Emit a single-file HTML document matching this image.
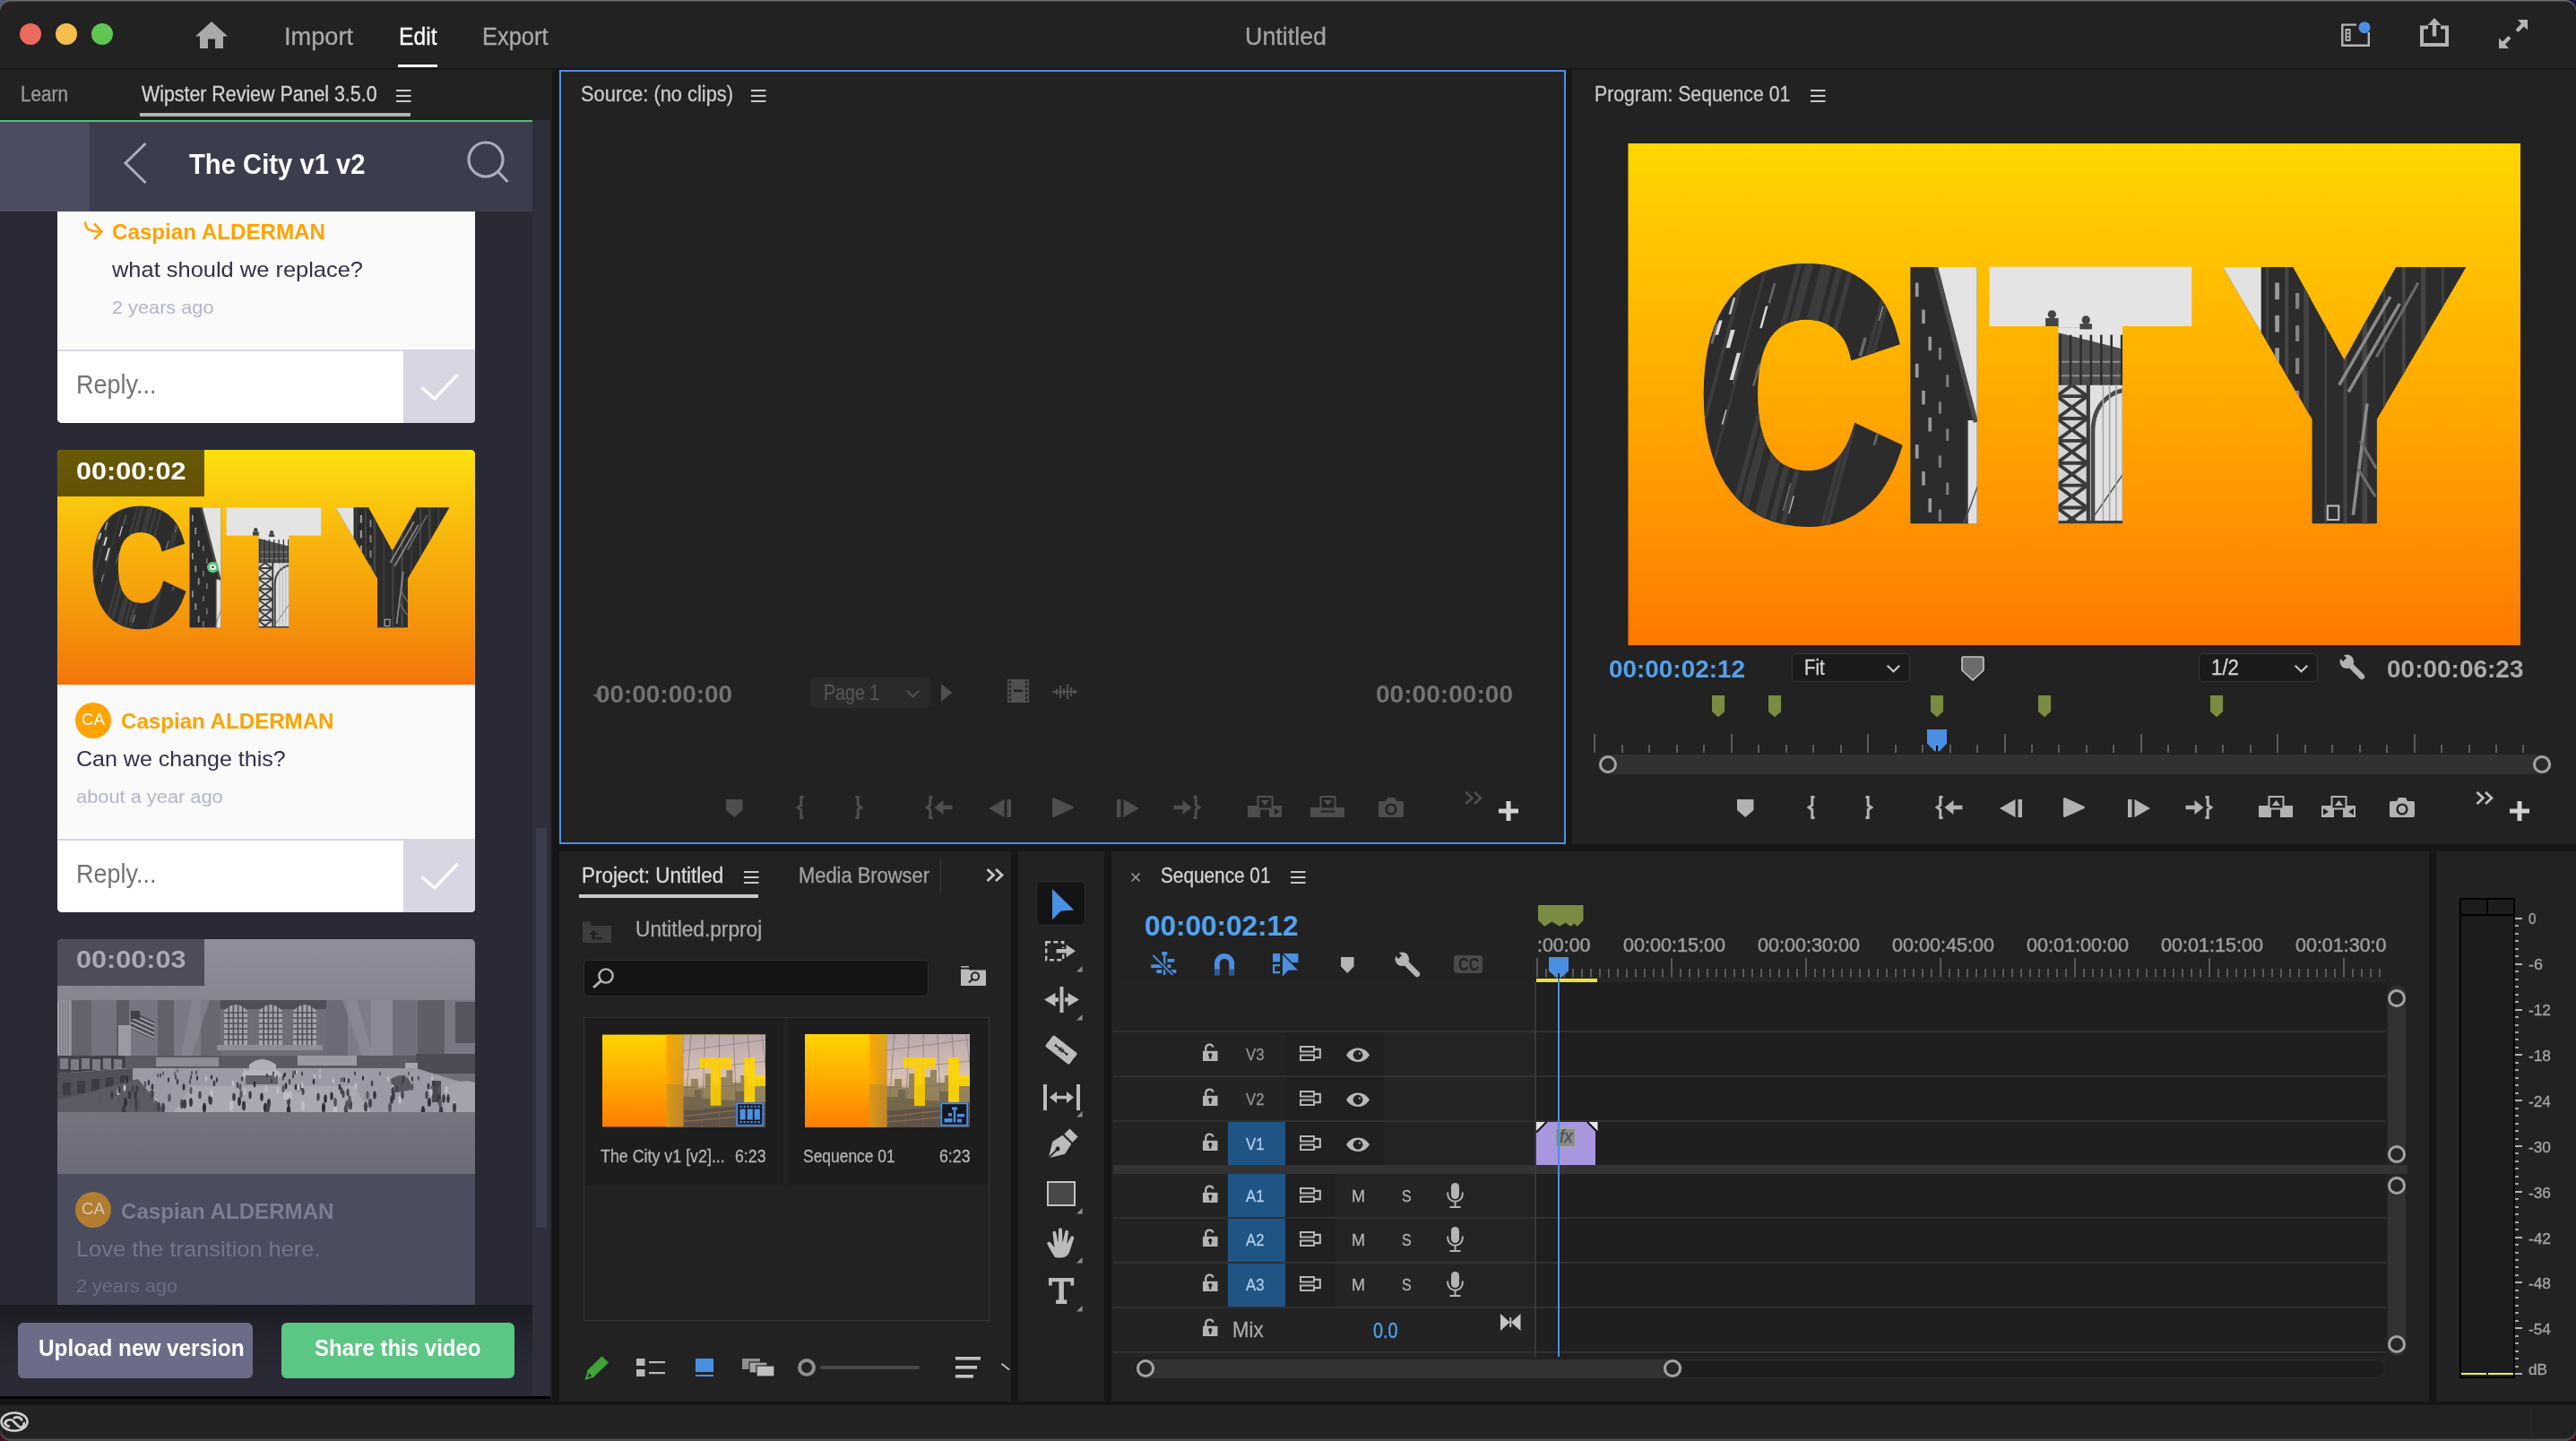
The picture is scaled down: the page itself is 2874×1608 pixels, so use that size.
<!DOCTYPE html>
<html><head><meta charset="utf-8"><title>Untitled</title><style>
html,body{margin:0;padding:0;}
body{width:2874px;height:1608px;background:#161616;position:relative;overflow:hidden;font-family:"Liberation Sans",sans-serif;}
div,svg,span.t{position:absolute;}
div.sec{left:0;top:0;width:0;height:0;}
span.t{white-space:nowrap;line-height:1;transform-origin:0 0;display:block;}
svg{overflow:visible;}
</style></head><body>
<div id="app-frame" class="sec">
<div style="left:0px;top:0px;width:16px;height:16px;background:#50607c;"></div>
<div style="left:2858px;top:0px;width:16px;height:16px;background:#15153e;"></div>
<div style="left:0px;top:1592px;width:16px;height:16px;background:#4a0f1c;"></div>
<div style="left:2858px;top:1592px;width:16px;height:16px;background:#3a0c16;"></div>
<div style="left:0px;top:0px;width:2874px;height:75.5px;background:#222222;border-radius:12px 12px 0 0;box-shadow:inset 0 1.5px 0 #707070;"></div>
<div style="left:22px;top:26px;width:24px;height:24px;background:#ec6a5e;border-radius:50%;"></div>
<div style="left:62px;top:26px;width:24px;height:24px;background:#f4bf4f;border-radius:50%;"></div>
<div style="left:102px;top:26px;width:24px;height:24px;background:#61c554;border-radius:50%;"></div>
<svg style="left:218px;top:24px;" width="36" height="30" viewBox="0 0 36 30"><path d="M18 0 L36 16.5 H31 V30 H22 V19.5 H14 V30 H5 V16.5 H0 Z" fill="#a9a9a9"/></svg>
<span class="t" id="t0" style="left:317px;top:26.62px;font-size:27.5px;color:#a9a9a9;-webkit-text-stroke:0.3px #a9a9a9;transform:scaleX(0.9880);">Import</span>
<span class="t" id="t1" style="left:445px;top:26.62px;font-size:27.5px;color:#ffffff;-webkit-text-stroke:0.3px #ffffff;transform:scaleX(0.8968);">Edit</span>
<div style="left:444px;top:72px;width:44px;height:3px;background:#ffffff;"></div>
<span class="t" id="t2" style="left:537.5px;top:26.62px;font-size:27.5px;color:#a9a9a9;-webkit-text-stroke:0.3px #a9a9a9;transform:scaleX(0.9247);">Export</span>
<span class="t" id="t3" style="left:1388.5px;top:27.12px;font-size:27.5px;color:#a3a3a3;-webkit-text-stroke:0.3px #a3a3a3;transform:scaleX(0.9759);">Untitled</span>
<svg style="left:2612px;top:20px;" width="34" height="34" viewBox="0 0 34 34"><path d="M17 7.6 H1.3 V30.8 H30.8 V16" fill="none" stroke="#b4b4b4" stroke-width="2.4"/><rect x="4.5" y="12" width="6" height="14" fill="#b4b4b4"/><rect x="6.3" y="14.2" width="2.4" height="2.2" fill="#222"/><rect x="6.3" y="18" width="2.4" height="2.2" fill="#222"/><rect x="6.3" y="21.8" width="2.4" height="2.2" fill="#222"/><circle cx="26" cy="10.7" r="6.5" fill="#4a90e2"/></svg>
<svg style="left:2700px;top:20px;" width="32" height="32" viewBox="0 0 32 32"><path d="M9 10.5 H2 V30 H30 V10.5 H23" fill="none" stroke="#b4b4b4" stroke-width="4"/><path d="M16 0 L23.5 8 H18.2 V20.5 H13.8 V8 H8.5 Z" fill="#b4b4b4"/></svg>
<svg style="left:2788px;top:22px;" width="32" height="32" viewBox="0 0 32 32"><path d="M32 0 V11.5 L28 7.5 L21.5 14 L18.5 11 L25 4.5 L21 0 Z M0 32 V20.5 L4 24.5 L10.5 18 L13.5 21 L7 27.5 L11 32 Z" fill="#b4b4b4"/></svg>
<div style="left:0px;top:1568px;width:2874px;height:40px;background:#222222;border-radius:0 0 12px 12px;box-shadow:inset 0 -2.5px 0 #4c4c4c;"></div>
<div style="left:2823px;top:1570px;width:1px;height:34px;background:#2c2c2c;"></div>
<svg style="left:0px;top:1575px;" width="32" height="23" viewBox="0 0 32 23"><g fill="none" stroke="#cfcfcf" stroke-width="2.6"><ellipse cx="16" cy="11.5" rx="14.5" ry="10"/><path d="M5 14.5 C6 9 12 8 15 11 L20.5 16.5 C24 19 28 16 26.5 12"/><path d="M11 16.5 C7 16.8 5.5 14 6.5 12 M15 8 C18 5 24 6.5 24.5 10.5"/></g></svg>
<div style="left:0px;top:78px;width:616px;height:1483px;background:#222222;"></div>
<div style="left:624px;top:78px;width:1122.5px;height:864px;background:#222222;box-sizing:border-box;border:2.2px solid #4891ec;"></div>
<div style="left:1754px;top:78px;width:1120px;height:864px;background:#222222;"></div>
<div style="left:624px;top:950px;width:503.5px;height:614px;background:#222222;"></div>
<div style="left:1136px;top:950px;width:96px;height:614px;background:#222222;"></div>
<div style="left:1240px;top:950px;width:1470px;height:614px;background:#222222;"></div>
<div style="left:2718px;top:950px;width:156px;height:614px;background:#222222;"></div>
</div>
<div id="shared-defs" class="sec">
<svg width="0" height="0" style="left:0;top:0"><defs><linearGradient id="cg" x1="0" y1="0" x2="0" y2="1"><stop offset="0" stop-color="#ffd600"/><stop offset="0.4" stop-color="#ffb300"/><stop offset="0.75" stop-color="#ff9300"/><stop offset="1" stop-color="#ff7800"/></linearGradient><mask id="cm" maskUnits="userSpaceOnUse" x="0" y="0" width="1920" height="1080"><text y="800" font-family="Liberation Sans, sans-serif" font-weight="700" font-size="750" fill="#fff" stroke="#fff" stroke-width="36" stroke-linejoin="miter"><tspan x="152.1" textLength="436.2" lengthAdjust="spacingAndGlyphs">C</tspan><tspan x="575.3" textLength="207.3" lengthAdjust="spacingAndGlyphs">I</tspan><tspan x="790.85" y="795" font-size="736" stroke-width="46" fill="#fff" stroke="#fff" textLength="408" lengthAdjust="spacingAndGlyphs">T</tspan><tspan x="1298.2" y="800" textLength="485.7" lengthAdjust="spacingAndGlyphs">Y</tspan></text></mask><linearGradient id="cg2" x1="0" y1="0" x2="0" y2="1"><stop offset="0" stop-color="#fde10f"/><stop offset="0.3" stop-color="#f9bd0d"/><stop offset="0.65" stop-color="#f59c0b"/><stop offset="1" stop-color="#f2760b"/></linearGradient><g id="cityletters"><text y="800" font-family="Liberation Sans, sans-serif" font-weight="700" font-size="750" fill="#2c2c2c" stroke="#2c2c2c" stroke-width="36" stroke-linejoin="miter"><tspan x="152.1" textLength="436.2" lengthAdjust="spacingAndGlyphs">C</tspan><tspan x="575.3" textLength="207.3" lengthAdjust="spacingAndGlyphs">I</tspan><tspan x="790.85" y="795" font-size="736" stroke-width="46" fill="#c4c4c4" stroke="#c4c4c4" textLength="408" lengthAdjust="spacingAndGlyphs">T</tspan><tspan x="1298.2" y="800" textLength="485.7" lengthAdjust="spacingAndGlyphs">Y</tspan></text><g mask="url(#cm)"><path d="M296 350 l5 0 l-13 48 l-5 0 z" fill="#d8d8d8"/><path d="M313 301 l5 0 l-12 43 l-5 0 z" fill="#6a6a6a"/><path d="M333 398 l5 0 l-12 44 l-5 0 z" fill="#d8d8d8"/><path d="M540 604 l5 0 l-13 45 l-5 0 z" fill="#6a6a6a"/><path d="M189 387 l6 0 l-12 44 l-6 0 z" fill="#6a6a6a"/><path d="M226 332 l10 0 l-10 36 l-10 0 z" fill="#bdbdbd"/><path d="M210 573 l6 0 l-9 32 l-6 0 z" fill="#d8d8d8"/><path d="M390 598 l8 0 l-12 42 l-8 0 z" fill="#8c8c8c"/><path d="M352 759 l6 0 l-11 38 l-6 0 z" fill="#bdbdbd"/><path d="M443 399 l8 0 l-13 45 l-8 0 z" fill="#8c8c8c"/><path d="M454 423 l6 0 l-17 59 l-6 0 z" fill="#6a6a6a"/><path d="M234 451 l8 0 l-16 58 l-8 0 z" fill="#d8d8d8"/><path d="M468 574 l7 0 l-16 56 l-7 0 z" fill="#8c8c8c"/><path d="M402 577 l10 0 l-11 41 l-10 0 z" fill="#8c8c8c"/><path d="M355 622 l9 0 l-8 27 l-9 0 z" fill="#6a6a6a"/><path d="M281 474 l5 0 l-14 48 l-5 0 z" fill="#6a6a6a"/><path d="M309 594 l6 0 l-12 42 l-6 0 z" fill="#8c8c8c"/><path d="M220 401 l10 0 l-11 39 l-10 0 z" fill="#d8d8d8"/><path d="M235 483 l6 0 l-10 35 l-6 0 z" fill="#6a6a6a"/><path d="M507 418 l7 0 l-11 40 l-7 0 z" fill="#6a6a6a"/><path d="M544 350 l6 0 l-9 31 l-6 0 z" fill="#bdbdbd"/><path d="M175 710 l7 0 l-9 31 l-7 0 z" fill="#bdbdbd"/><path d="M333 466 l11 0 l-13 45 l-11 0 z" fill="#d8d8d8"/><path d="M348 732 l9 0 l-16 58 l-9 0 z" fill="#6a6a6a"/><path d="M325 479 l7 0 l-12 42 l-7 0 z" fill="#bdbdbd"/><path d="M196 381 l7 0 l-9 31 l-7 0 z" fill="#d8d8d8"/><path d="M213 250 l-160 600" stroke="#3c3c3c" stroke-width="10"/><path d="M395 250 l-160 600" stroke="#3c3c3c" stroke-width="13"/><path d="M428 250 l-160 600" stroke="#3c3c3c" stroke-width="5"/><path d="M257 250 l-160 600" stroke="#3c3c3c" stroke-width="8"/><path d="M436 250 l-160 600" stroke="#3c3c3c" stroke-width="14"/><path d="M423 250 l-160 600" stroke="#3c3c3c" stroke-width="9"/><path d="M218 250 l-160 600" stroke="#3c3c3c" stroke-width="9"/><path d="M581 250 l-160 600" stroke="#3c3c3c" stroke-width="9"/><path d="M301 250 l-160 600" stroke="#3c3c3c" stroke-width="5"/><path d="M485 250 l-160 600" stroke="#3c3c3c" stroke-width="11"/><path d="M371 250 l-160 600" stroke="#3c3c3c" stroke-width="11"/><path d="M387 250 l-160 600" stroke="#3c3c3c" stroke-width="6"/><path d="M570 250 l-160 600" stroke="#3c3c3c" stroke-width="8"/><path d="M460 250 l-160 600" stroke="#3c3c3c" stroke-width="13"/><path d="M655 240 L760 240 L760 590 L748 600 Z" fill="#e3e3e3"/><rect x="729" y="596" width="40" height="240" fill="#e0e0e0"/><path d="M729 596 V836" stroke="#3a3a3a" stroke-width="5"/><path d="M716 836 L766 700" stroke="#555" stroke-width="3"/><path d="M655 240 L748 600" stroke="#4a4a4a" stroke-width="10"/><rect x="618" y="300" width="7" height="30" fill="#9a9a9a"/><rect x="668" y="440" width="6" height="26" fill="#7e7e7e"/><rect x="632" y="358" width="7" height="30" fill="#9a9a9a"/><rect x="684" y="498" width="6" height="26" fill="#7e7e7e"/><rect x="646" y="416" width="7" height="30" fill="#9a9a9a"/><rect x="668" y="556" width="6" height="26" fill="#7e7e7e"/><rect x="618" y="474" width="7" height="30" fill="#9a9a9a"/><rect x="684" y="614" width="6" height="26" fill="#7e7e7e"/><rect x="632" y="532" width="7" height="30" fill="#9a9a9a"/><rect x="668" y="672" width="6" height="26" fill="#7e7e7e"/><rect x="646" y="590" width="7" height="30" fill="#9a9a9a"/><rect x="684" y="730" width="6" height="26" fill="#7e7e7e"/><rect x="618" y="648" width="7" height="30" fill="#9a9a9a"/><rect x="668" y="788" width="6" height="26" fill="#7e7e7e"/><rect x="632" y="706" width="7" height="30" fill="#9a9a9a"/><rect x="684" y="846" width="6" height="26" fill="#7e7e7e"/><rect x="646" y="764" width="7" height="30" fill="#9a9a9a"/><rect x="668" y="904" width="6" height="26" fill="#7e7e7e"/><rect x="760" y="240" width="470" height="164" fill="#e4e4e4"/><rect x="912" y="396" width="170" height="440" fill="#e0e0e0"/><rect x="912" y="400" width="78" height="440" fill="#d4d4d4"/><path d="M922 400 L988 448 M988 400 L922 448 M912 400 H990" stroke="#3a3a3a" stroke-width="7.5" fill="none"/><path d="M922 448 L988 496 M988 448 L922 496 M912 448 H990" stroke="#3a3a3a" stroke-width="7.5" fill="none"/><path d="M922 496 L988 544 M988 496 L922 544 M912 496 H990" stroke="#3a3a3a" stroke-width="7.5" fill="none"/><path d="M922 544 L988 592 M988 544 L922 592 M912 544 H990" stroke="#3a3a3a" stroke-width="7.5" fill="none"/><path d="M922 592 L988 640 M988 592 L922 640 M912 592 H990" stroke="#3a3a3a" stroke-width="7.5" fill="none"/><path d="M922 640 L988 688 M988 640 L922 688 M912 640 H990" stroke="#3a3a3a" stroke-width="7.5" fill="none"/><path d="M922 688 L988 736 M988 688 L922 736 M912 688 H990" stroke="#3a3a3a" stroke-width="7.5" fill="none"/><path d="M922 736 L988 784 M988 736 L922 784 M912 736 H990" stroke="#3a3a3a" stroke-width="7.5" fill="none"/><path d="M922 784 L988 832 M988 784 L922 832 M912 784 H990" stroke="#3a3a3a" stroke-width="7.5" fill="none"/><path d="M921 400 V830 M990 400 V830" stroke="#3a3a3a" stroke-width="8"/><path d="M1000 830 V620 C1000 560 1040 530 1080 530" fill="none" stroke="#4a4a4a" stroke-width="9"/><path d="M1004 800 L1080 690" stroke="#555" stroke-width="3"/><path d="M912 404 L1080 446 V520 H912 Z" fill="#4e4e4e"/><path d="M912 396 H1080 V446 L912 404 Z" fill="#e4e4e4"/><path d="M912 470 H1080 M912 500 H1080" stroke="#8a8a8a" stroke-width="4"/><path d="M930 412 V520" stroke="#2e2e2e" stroke-width="5"/><path d="M952 412 V520" stroke="#2e2e2e" stroke-width="5"/><path d="M974 412 V520" stroke="#2e2e2e" stroke-width="5"/><path d="M996 412 V520" stroke="#2e2e2e" stroke-width="5"/><path d="M1018 412 V520" stroke="#2e2e2e" stroke-width="5"/><path d="M1040 412 V520" stroke="#2e2e2e" stroke-width="5"/><path d="M1062 412 V520" stroke="#2e2e2e" stroke-width="5"/><path d="M1022 520 V830" stroke="#a8a8a8" stroke-width="3"/><path d="M1036 520 V830" stroke="#a8a8a8" stroke-width="3"/><path d="M1050 520 V830" stroke="#a8a8a8" stroke-width="3"/><path d="M1064 520 V830" stroke="#a8a8a8" stroke-width="3"/><circle cx="912" cy="368" r="9" fill="#444"/><rect x="898" y="376" width="28" height="20" fill="#444"/><circle cx="985" cy="380" r="9" fill="#444"/><rect x="972" y="388" width="26" height="12" fill="#444"/><rect x="912" y="812" width="170" height="26" fill="#3c3c3c"/><rect x="1260" y="240" width="102" height="200" fill="#e2e2e2"/><path d="M1375 250 V830" stroke="#444" stroke-width="5"/><path d="M1417 250 V830" stroke="#444" stroke-width="8"/><path d="M1459 250 V830" stroke="#444" stroke-width="11"/><path d="M1501 250 V830" stroke="#444" stroke-width="5"/><path d="M1543 250 V830" stroke="#444" stroke-width="8"/><path d="M1585 250 V830" stroke="#444" stroke-width="11"/><path d="M1627 250 V830" stroke="#444" stroke-width="5"/><path d="M1669 250 V830" stroke="#444" stroke-width="8"/><path d="M1711 250 V830" stroke="#444" stroke-width="11"/><path d="M1753 250 V830" stroke="#444" stroke-width="5"/><rect x="1392" y="300" width="9" height="36" fill="#9b9b9b"/><rect x="1436" y="322" width="8" height="34" fill="#858585"/><rect x="1392" y="370" width="9" height="36" fill="#9b9b9b"/><rect x="1436" y="392" width="8" height="34" fill="#858585"/><rect x="1392" y="440" width="9" height="36" fill="#9b9b9b"/><rect x="1436" y="462" width="8" height="34" fill="#858585"/><rect x="1392" y="510" width="9" height="36" fill="#9b9b9b"/><rect x="1436" y="532" width="8" height="34" fill="#858585"/><rect x="1392" y="580" width="9" height="36" fill="#9b9b9b"/><rect x="1436" y="602" width="8" height="34" fill="#858585"/><rect x="1392" y="650" width="9" height="36" fill="#9b9b9b"/><rect x="1436" y="672" width="8" height="34" fill="#858585"/><rect x="1392" y="720" width="9" height="36" fill="#9b9b9b"/><rect x="1436" y="742" width="8" height="34" fill="#858585"/><path d="M1640 330 L1530 520 M1660 345 L1550 535 M1590 560 L1560 800" stroke="#8a8a8a" stroke-width="7" fill="none"/><path d="M1700 300 L1610 460 M1575 640 L1610 700 M1570 700 L1608 760" stroke="#6c6c6c" stroke-width="6" fill="none"/><rect x="1505" y="780" width="24" height="30" fill="none" stroke="#bbb" stroke-width="4"/></g></g><g id="cityimg"><rect width="1920" height="1080" fill="url(#cg)"/><use href="#cityletters"/></g><g id="gcphoto"><rect width="466" height="125" fill="#6e6e7a"/><rect x="120" y="0" width="250" height="10" fill="#4e4e59"/><rect x="0" y="0" width="16" height="70" fill="#8d8d99"/><rect x="16" y="0" width="22" height="70" fill="#63636e"/><rect x="38" y="0" width="28" height="70" fill="#747480"/><rect x="66" y="0" width="14" height="70" fill="#5c5c67"/><rect x="80" y="0" width="32" height="70" fill="#767682"/><rect x="112" y="0" width="18" height="70" fill="#61616c"/><rect x="130" y="0" width="30" height="70" fill="#7a7a86"/><rect x="160" y="0" width="22" height="70" fill="#676772"/><rect x="300" y="0" width="24" height="70" fill="#6b6b77"/><rect x="324" y="0" width="26" height="70" fill="#7d7d89"/><rect x="350" y="0" width="24" height="70" fill="#8a8a96"/><rect x="374" y="0" width="28" height="70" fill="#70707c"/><rect x="402" y="0" width="30" height="70" fill="#5e5e69"/><rect x="432" y="0" width="34" height="70" fill="#787884"/><rect x="0" y="2" width="14" height="58" fill="#a2a2ad"/><path d="M3 2 V60" stroke="#5a5a65" stroke-width="1"/><path d="M6 2 V60" stroke="#5a5a65" stroke-width="1"/><path d="M9 2 V60" stroke="#5a5a65" stroke-width="1"/><path d="M12 2 V60" stroke="#5a5a65" stroke-width="1"/><rect x="444" y="2" width="22" height="46" fill="#55555f"/><rect x="68" y="28" width="14" height="34" fill="#9a9aa5"/><path d="M186 50 V12 Q199 -2 212 12 V50 Z" fill="#a3a3ae"/><path d="M191.2 3 V50" stroke="#4d4d58" stroke-width="1.6"/><path d="M196.4 3 V50" stroke="#4d4d58" stroke-width="1.6"/><path d="M201.6 3 V50" stroke="#4d4d58" stroke-width="1.6"/><path d="M206.8 3 V50" stroke="#4d4d58" stroke-width="1.6"/><path d="M186 14 H212" stroke="#4d4d58" stroke-width="1.4"/><path d="M186 20 H212" stroke="#4d4d58" stroke-width="1.4"/><path d="M186 26 H212" stroke="#4d4d58" stroke-width="1.4"/><path d="M186 32 H212" stroke="#4d4d58" stroke-width="1.4"/><path d="M186 38 H212" stroke="#4d4d58" stroke-width="1.4"/><path d="M186 44 H212" stroke="#4d4d58" stroke-width="1.4"/><path d="M225 50 V12 Q238 -2 251 12 V50 Z" fill="#a3a3ae"/><path d="M230.2 3 V50" stroke="#4d4d58" stroke-width="1.6"/><path d="M235.4 3 V50" stroke="#4d4d58" stroke-width="1.6"/><path d="M240.6 3 V50" stroke="#4d4d58" stroke-width="1.6"/><path d="M245.8 3 V50" stroke="#4d4d58" stroke-width="1.6"/><path d="M225 14 H251" stroke="#4d4d58" stroke-width="1.4"/><path d="M225 20 H251" stroke="#4d4d58" stroke-width="1.4"/><path d="M225 26 H251" stroke="#4d4d58" stroke-width="1.4"/><path d="M225 32 H251" stroke="#4d4d58" stroke-width="1.4"/><path d="M225 38 H251" stroke="#4d4d58" stroke-width="1.4"/><path d="M225 44 H251" stroke="#4d4d58" stroke-width="1.4"/><path d="M263 50 V12 Q276 -2 289 12 V50 Z" fill="#a3a3ae"/><path d="M268.2 3 V50" stroke="#4d4d58" stroke-width="1.6"/><path d="M273.4 3 V50" stroke="#4d4d58" stroke-width="1.6"/><path d="M278.6 3 V50" stroke="#4d4d58" stroke-width="1.6"/><path d="M283.8 3 V50" stroke="#4d4d58" stroke-width="1.6"/><path d="M263 14 H289" stroke="#4d4d58" stroke-width="1.4"/><path d="M263 20 H289" stroke="#4d4d58" stroke-width="1.4"/><path d="M263 26 H289" stroke="#4d4d58" stroke-width="1.4"/><path d="M263 32 H289" stroke="#4d4d58" stroke-width="1.4"/><path d="M263 38 H289" stroke="#4d4d58" stroke-width="1.4"/><path d="M263 44 H289" stroke="#4d4d58" stroke-width="1.4"/><rect x="178" y="50" width="118" height="6" fill="#8d8d98"/><path d="M82 12 L108 24 V44 L82 32 Z" fill="#4b4b56"/><path d="M82 15 L108 27" stroke="#a7a7b2" stroke-width="1.6"/><path d="M82 20 L108 32" stroke="#a7a7b2" stroke-width="1.6"/><path d="M82 25 L108 37" stroke="#a7a7b2" stroke-width="1.6"/><path d="M82 30 L108 42" stroke="#a7a7b2" stroke-width="1.6"/><rect x="82" y="12" width="10" height="9" fill="#3f3f4a"/><path d="M150 0 L170 0 L150 62 L138 62 Z" fill="#8b8b97" opacity="0.6"/><path d="M318 0 L334 0 L352 62 L340 62 Z" fill="#8f8f9b" opacity="0.6"/><rect x="0" y="62" width="76" height="20" fill="#42424d"/><rect x="3" y="65" width="9" height="12" fill="#7c7c88"/><rect x="15" y="66" width="9" height="12" fill="#7c7c88"/><rect x="27" y="65" width="9" height="12" fill="#7c7c88"/><rect x="39" y="66" width="9" height="12" fill="#7c7c88"/><rect x="51" y="65" width="9" height="12" fill="#7c7c88"/><rect x="63" y="66" width="9" height="12" fill="#7c7c88"/><rect x="76" y="62" width="390" height="14" fill="#5a5a65"/><rect x="110" y="64" width="70" height="10" fill="#8c8c97"/><rect x="268" y="62" width="66" height="11" fill="#9a9aa5"/><rect x="400" y="60" width="66" height="22" fill="#4c4c57"/><rect x="388" y="70" width="14" height="18" fill="#a5a5b0"/><path d="M76 76 H400 L466 96 V125 H0 V82 Z" fill="#9b9ba7"/><path d="M150 96 H330 L350 125 H130 Z" fill="#a9a9b4"/><path d="M0 82 L84 76 L84 92 L0 125 Z" fill="#50505b"/><rect x="6" y="92" width="9" height="14" fill="#3c3c47"/><rect x="22" y="90" width="9" height="14" fill="#3c3c47"/><rect x="38" y="88" width="9" height="14" fill="#3c3c47"/><rect x="54" y="86" width="9" height="14" fill="#3c3c47"/><rect x="70" y="84" width="9" height="14" fill="#3c3c47"/><path d="M0 112 L90 88 L120 125 H0 Z" fill="#5b5b66"/><path d="M432 125 V100 Q448 86 466 92 V125 Z" fill="#a3a3ae"/><rect x="418" y="90" width="10" height="24" fill="#484853"/><path d="M372 88 Q392 76 396 100 L374 104 Z" fill="#585863"/><ellipse cx="228" cy="83" rx="22" ry="7" fill="#b6b6c0"/><rect x="210" y="84" width="36" height="10" fill="#62626d"/><path d="M214 72 Q228 60 244 72 V78 H214 Z" fill="#b0b0bb"/><ellipse cx="269" cy="99" rx="1.5" ry="3.8" fill="#55555f"/><ellipse cx="379" cy="99" rx="1.5" ry="3.8" fill="#44444f"/><ellipse cx="253" cy="86" rx="1.1" ry="2.8" fill="#c0c0ca"/><ellipse cx="76" cy="114" rx="1.9" ry="5.1" fill="#2f2f3a"/><ellipse cx="263" cy="85" rx="1.0" ry="2.6" fill="#3a3a45"/><ellipse cx="205" cy="105" rx="1.7" ry="4.4" fill="#55555f"/><ellipse cx="291" cy="108" rx="1.7" ry="4.6" fill="#44444f"/><ellipse cx="375" cy="107" rx="1.7" ry="4.5" fill="#3a3a45"/><ellipse cx="150" cy="81" rx="0.9" ry="2.3" fill="#44444f"/><ellipse cx="354" cy="106" rx="1.7" ry="4.4" fill="#2f2f3a"/><ellipse cx="374" cy="98" rx="1.4" ry="3.8" fill="#c0c0ca"/><ellipse cx="178" cy="89" rx="1.1" ry="3.0" fill="#3a3a45"/><ellipse cx="228" cy="108" rx="1.8" ry="4.6" fill="#2f2f3a"/><ellipse cx="266" cy="97" rx="1.4" ry="3.6" fill="#3a3a45"/><ellipse cx="170" cy="111" rx="1.8" ry="4.8" fill="#44444f"/><ellipse cx="68" cy="102" rx="1.5" ry="4.0" fill="#c0c0ca"/><ellipse cx="203" cy="113" rx="1.9" ry="5.0" fill="#2f2f3a"/><ellipse cx="414" cy="96" rx="1.4" ry="3.6" fill="#3a3a45"/><ellipse cx="396" cy="88" rx="1.1" ry="2.9" fill="#3a3a45"/><ellipse cx="426" cy="100" rx="1.5" ry="3.9" fill="#55555f"/><ellipse cx="272" cy="97" rx="1.4" ry="3.7" fill="#44444f"/><ellipse cx="149" cy="114" rx="1.9" ry="5.0" fill="#3a3a45"/><ellipse cx="76" cy="92" rx="1.2" ry="3.3" fill="#55555f"/><ellipse cx="88" cy="113" rx="1.9" ry="5.0" fill="#44444f"/><ellipse cx="48" cy="111" rx="1.8" ry="4.8" fill="#55555f"/><ellipse cx="110" cy="115" rx="1.9" ry="5.1" fill="#c0c0ca"/><ellipse cx="252" cy="87" rx="1.1" ry="2.8" fill="#44444f"/><ellipse cx="204" cy="97" rx="1.4" ry="3.7" fill="#55555f"/><ellipse cx="141" cy="97" rx="1.4" ry="3.7" fill="#2f2f3a"/><ellipse cx="443" cy="118" rx="2.0" ry="5.4" fill="#c0c0ca"/><ellipse cx="385" cy="92" rx="1.2" ry="3.2" fill="#44444f"/><ellipse cx="418" cy="87" rx="1.1" ry="2.8" fill="#c0c0ca"/><ellipse cx="87" cy="108" rx="1.7" ry="4.5" fill="#44444f"/><ellipse cx="166" cy="88" rx="1.1" ry="2.9" fill="#c0c0ca"/><ellipse cx="175" cy="93" rx="1.3" ry="3.3" fill="#3a3a45"/><ellipse cx="155" cy="81" rx="0.9" ry="2.4" fill="#44444f"/><ellipse cx="209" cy="79" rx="0.8" ry="2.2" fill="#c0c0ca"/><ellipse cx="418" cy="99" rx="1.5" ry="3.8" fill="#55555f"/><ellipse cx="91" cy="116" rx="2.0" ry="5.2" fill="#55555f"/><ellipse cx="132" cy="86" rx="1.1" ry="2.8" fill="#44444f"/><ellipse cx="139" cy="116" rx="2.0" ry="5.2" fill="#44444f"/><ellipse cx="293" cy="85" rx="1.0" ry="2.7" fill="#c0c0ca"/><ellipse cx="403" cy="87" rx="1.1" ry="2.8" fill="#55555f"/><ellipse cx="215" cy="106" rx="1.7" ry="4.4" fill="#3a3a45"/><ellipse cx="254" cy="83" rx="1.0" ry="2.5" fill="#2f2f3a"/><ellipse cx="320" cy="89" rx="1.1" ry="3.0" fill="#2f2f3a"/><ellipse cx="396" cy="97" rx="1.4" ry="3.7" fill="#55555f"/><ellipse cx="134" cy="91" rx="1.2" ry="3.2" fill="#3a3a45"/><ellipse cx="243" cy="84" rx="1.0" ry="2.6" fill="#c0c0ca"/><ellipse cx="159" cy="106" rx="1.7" ry="4.4" fill="#44444f"/><ellipse cx="69" cy="112" rx="1.9" ry="4.9" fill="#55555f"/><ellipse cx="84" cy="99" rx="1.4" ry="3.8" fill="#44444f"/><ellipse cx="259" cy="91" rx="1.2" ry="3.2" fill="#44444f"/><ellipse cx="131" cy="82" rx="0.9" ry="2.4" fill="#55555f"/><ellipse cx="310" cy="123" rx="2.2" ry="5.8" fill="#c0c0ca"/><ellipse cx="106" cy="105" rx="1.6" ry="4.3" fill="#3a3a45"/><ellipse cx="232" cy="120" rx="2.1" ry="5.6" fill="#2f2f3a"/><ellipse cx="431" cy="110" rx="1.8" ry="4.7" fill="#3a3a45"/><ellipse cx="80" cy="106" rx="1.7" ry="4.4" fill="#3a3a45"/><ellipse cx="171" cy="112" rx="1.9" ry="4.9" fill="#3a3a45"/><ellipse cx="265" cy="81" rx="0.9" ry="2.4" fill="#3a3a45"/><ellipse cx="344" cy="119" rx="2.1" ry="5.5" fill="#44444f"/><ellipse cx="415" cy="114" rx="1.9" ry="5.1" fill="#2f2f3a"/><ellipse cx="241" cy="82" rx="0.9" ry="2.4" fill="#3a3a45"/><ellipse cx="208" cy="118" rx="2.1" ry="5.4" fill="#3a3a45"/><ellipse cx="274" cy="118" rx="2.0" ry="5.4" fill="#c0c0ca"/><ellipse cx="197" cy="108" rx="1.8" ry="4.6" fill="#3a3a45"/><ellipse cx="81" cy="106" rx="1.7" ry="4.4" fill="#3a3a45"/><ellipse cx="408" cy="124" rx="2.2" ry="5.9" fill="#2f2f3a"/><ellipse cx="333" cy="96" rx="1.4" ry="3.6" fill="#c0c0ca"/><ellipse cx="233" cy="99" rx="1.5" ry="3.8" fill="#c0c0ca"/><ellipse cx="332" cy="82" rx="0.9" ry="2.4" fill="#3a3a45"/><ellipse cx="102" cy="92" rx="1.2" ry="3.3" fill="#3a3a45"/><ellipse cx="317" cy="89" rx="1.1" ry="3.0" fill="#55555f"/><ellipse cx="310" cy="114" rx="1.9" ry="5.0" fill="#55555f"/><ellipse cx="78" cy="90" rx="1.2" ry="3.1" fill="#2f2f3a"/><ellipse cx="287" cy="85" rx="1.0" ry="2.6" fill="#c0c0ca"/><ellipse cx="387" cy="86" rx="1.0" ry="2.7" fill="#55555f"/><ellipse cx="149" cy="101" rx="1.5" ry="4.0" fill="#55555f"/><ellipse cx="125" cy="109" rx="1.8" ry="4.6" fill="#55555f"/><ellipse cx="349" cy="115" rx="2.0" ry="5.1" fill="#44444f"/><ellipse cx="194" cy="118" rx="2.1" ry="5.4" fill="#c0c0ca"/><ellipse cx="118" cy="120" rx="2.1" ry="5.6" fill="#44444f"/><ellipse cx="374" cy="101" rx="1.5" ry="4.0" fill="#3a3a45"/><ellipse cx="426" cy="111" rx="1.8" ry="4.8" fill="#2f2f3a"/><ellipse cx="82" cy="116" rx="2.0" ry="5.2" fill="#55555f"/><ellipse cx="148" cy="91" rx="1.2" ry="3.1" fill="#55555f"/><ellipse cx="255" cy="96" rx="1.4" ry="3.5" fill="#2f2f3a"/><ellipse cx="382" cy="111" rx="1.8" ry="4.8" fill="#c0c0ca"/><ellipse cx="89" cy="99" rx="1.5" ry="3.8" fill="#3a3a45"/><ellipse cx="286" cy="91" rx="1.2" ry="3.2" fill="#2f2f3a"/><ellipse cx="172" cy="104" rx="1.6" ry="4.3" fill="#c0c0ca"/><ellipse cx="134" cy="79" rx="0.8" ry="2.2" fill="#55555f"/><ellipse cx="341" cy="87" rx="1.1" ry="2.8" fill="#2f2f3a"/><ellipse cx="124" cy="89" rx="1.1" ry="3.0" fill="#3a3a45"/><ellipse cx="74" cy="123" rx="2.2" ry="5.8" fill="#3a3a45"/><ellipse cx="306" cy="107" rx="1.7" ry="4.5" fill="#2f2f3a"/><ellipse cx="322" cy="122" rx="2.2" ry="5.7" fill="#44444f"/><ellipse cx="142" cy="116" rx="2.0" ry="5.2" fill="#3a3a45"/><ellipse cx="258" cy="113" rx="1.9" ry="5.0" fill="#3a3a45"/><ellipse cx="172" cy="86" rx="1.1" ry="2.8" fill="#2f2f3a"/><ellipse cx="417" cy="103" rx="1.6" ry="4.1" fill="#c0c0ca"/><ellipse cx="346" cy="106" rx="1.7" ry="4.4" fill="#55555f"/><ellipse cx="327" cy="117" rx="2.0" ry="5.3" fill="#44444f"/><ellipse cx="392" cy="82" rx="0.9" ry="2.4" fill="#55555f"/><ellipse cx="234" cy="84" rx="1.0" ry="2.6" fill="#3a3a45"/><ellipse cx="273" cy="95" rx="1.3" ry="3.5" fill="#c0c0ca"/><ellipse cx="427" cy="115" rx="1.9" ry="5.1" fill="#55555f"/><ellipse cx="420" cy="93" rx="1.3" ry="3.3" fill="#3a3a45"/><ellipse cx="373" cy="111" rx="1.8" ry="4.8" fill="#3a3a45"/><ellipse cx="386" cy="88" rx="1.1" ry="2.9" fill="#3a3a45"/><ellipse cx="258" cy="123" rx="2.2" ry="5.8" fill="#2f2f3a"/><ellipse cx="325" cy="90" rx="1.2" ry="3.1" fill="#3a3a45"/><ellipse cx="98" cy="94" rx="1.3" ry="3.4" fill="#55555f"/><ellipse cx="220" cy="94" rx="1.3" ry="3.4" fill="#2f2f3a"/><ellipse cx="69" cy="100" rx="1.5" ry="3.9" fill="#3a3a45"/><ellipse cx="75" cy="98" rx="1.4" ry="3.7" fill="#c0c0ca"/><ellipse cx="351" cy="93" rx="1.3" ry="3.4" fill="#44444f"/><ellipse cx="434" cy="100" rx="1.5" ry="3.9" fill="#c0c0ca"/><ellipse cx="323" cy="117" rx="2.0" ry="5.3" fill="#55555f"/><ellipse cx="319" cy="105" rx="1.6" ry="4.3" fill="#44444f"/><ellipse cx="269" cy="98" rx="1.4" ry="3.8" fill="#c0c0ca"/><ellipse cx="254" cy="107" rx="1.7" ry="4.5" fill="#c0c0ca"/><ellipse cx="308" cy="90" rx="1.2" ry="3.1" fill="#c0c0ca"/><ellipse cx="369" cy="88" rx="1.1" ry="2.9" fill="#c0c0ca"/><ellipse cx="274" cy="102" rx="1.6" ry="4.1" fill="#44444f"/><ellipse cx="106" cy="97" rx="1.4" ry="3.7" fill="#3a3a45"/><ellipse cx="61" cy="106" rx="1.7" ry="4.4" fill="#3a3a45"/><ellipse cx="209" cy="102" rx="1.5" ry="4.1" fill="#c0c0ca"/><ellipse cx="115" cy="84" rx="1.0" ry="2.6" fill="#44444f"/><ellipse cx="263" cy="81" rx="0.9" ry="2.3" fill="#55555f"/><ellipse cx="371" cy="120" rx="2.1" ry="5.6" fill="#55555f"/><ellipse cx="239" cy="90" rx="1.2" ry="3.1" fill="#44444f"/><ellipse cx="392" cy="94" rx="1.3" ry="3.4" fill="#55555f"/><ellipse cx="97" cy="102" rx="1.6" ry="4.1" fill="#55555f"/><ellipse cx="412" cy="106" rx="1.7" ry="4.4" fill="#44444f"/><ellipse cx="436" cy="110" rx="1.8" ry="4.8" fill="#3a3a45"/><ellipse cx="156" cy="87" rx="1.1" ry="2.8" fill="#2f2f3a"/><ellipse cx="196" cy="93" rx="1.3" ry="3.3" fill="#c0c0ca"/><ellipse cx="246" cy="101" rx="1.5" ry="4.0" fill="#c0c0ca"/><ellipse cx="253" cy="84" rx="1.0" ry="2.6" fill="#2f2f3a"/><ellipse cx="326" cy="111" rx="1.8" ry="4.8" fill="#55555f"/><ellipse cx="293" cy="79" rx="0.8" ry="2.2" fill="#c0c0ca"/><ellipse cx="260" cy="106" rx="1.7" ry="4.4" fill="#c0c0ca"/><ellipse cx="257" cy="107" rx="1.7" ry="4.5" fill="#c0c0ca"/><ellipse cx="385" cy="106" rx="1.7" ry="4.4" fill="#44444f"/><ellipse cx="297" cy="120" rx="2.1" ry="5.6" fill="#2f2f3a"/><ellipse cx="164" cy="120" rx="2.1" ry="5.5" fill="#2f2f3a"/><ellipse cx="113" cy="119" rx="2.1" ry="5.5" fill="#44444f"/><ellipse cx="88" cy="119" rx="2.1" ry="5.5" fill="#44444f"/><ellipse cx="112" cy="84" rx="1.0" ry="2.6" fill="#55555f"/><ellipse cx="360" cy="82" rx="0.9" ry="2.5" fill="#55555f"/><ellipse cx="324" cy="103" rx="1.6" ry="4.2" fill="#44444f"/><ellipse cx="315" cy="97" rx="1.4" ry="3.6" fill="#3a3a45"/><ellipse cx="273" cy="82" rx="0.9" ry="2.5" fill="#2f2f3a"/><ellipse cx="443" cy="120" rx="2.1" ry="5.5" fill="#3a3a45"/><ellipse cx="299" cy="110" rx="1.8" ry="4.8" fill="#2f2f3a"/><ellipse cx="317" cy="101" rx="1.5" ry="4.0" fill="#44444f"/><ellipse cx="236" cy="115" rx="2.0" ry="5.1" fill="#3a3a45"/><ellipse cx="267" cy="80" rx="0.9" ry="2.2" fill="#c0c0ca"/><ellipse cx="235" cy="120" rx="2.1" ry="5.5" fill="#44444f"/><ellipse cx="149" cy="86" rx="1.1" ry="2.8" fill="#44444f"/><ellipse cx="428" cy="124" rx="2.2" ry="5.8" fill="#3a3a45"/><ellipse cx="104" cy="105" rx="1.6" ry="4.3" fill="#55555f"/><ellipse cx="118" cy="82" rx="0.9" ry="2.4" fill="#55555f"/><ellipse cx="252" cy="99" rx="1.5" ry="3.9" fill="#55555f"/><ellipse cx="206" cy="88" rx="1.1" ry="2.9" fill="#3a3a45"/><ellipse cx="110" cy="117" rx="2.0" ry="5.3" fill="#55555f"/><ellipse cx="201" cy="95" rx="1.3" ry="3.5" fill="#44444f"/><ellipse cx="87" cy="106" rx="1.7" ry="4.4" fill="#3a3a45"/></g></defs></svg>
</div>
<div id="wipster-review-panel" class="sec">
<span class="t" id="t4" style="left:23px;top:94.20px;font-size:23px;color:#9c9c9c;-webkit-text-stroke:0.3px #9c9c9c;transform:scaleX(0.9009);">Learn</span>
<span class="t" id="t5" style="left:158px;top:94.20px;font-size:23px;color:#d2d2d2;-webkit-text-stroke:0.3px #d2d2d2;transform:scaleX(0.9292);">Wipster Review Panel 3.5.0</span>
<svg style="left:442px;top:100px;" width="16.5" height="14" viewBox="0 0 16.5 14"><path d="M0 1 H16.5 M0 7 H16.5 M0 13 H16.5" stroke="#c8c8c8" stroke-width="1.8" fill="none"/></svg>
<div style="left:156px;top:126px;width:302px;height:3.6px;background:#b4b4b4;"></div>
<div style="left:0px;top:134px;width:594px;height:2px;background:#50c27c;"></div>
<div style="left:0px;top:136px;width:594px;height:1421.5px;background:#292a35;"></div>
<div style="left:594px;top:134px;width:20px;height:1423.5px;background:#2e2f3b;"></div>
<div style="left:598px;top:924px;width:12px;height:446px;background:#3c3d4c;"></div>
<div style="left:0px;top:1557.5px;width:614px;height:3.5px;background:#000000;"></div>
<div style="left:64px;top:236px;width:466px;height:236px;background:#fafafa;border-radius:0 0 5px 5px;"></div>
<svg style="left:94px;top:247px;" width="21" height="21" viewBox="0 0 21 21"><path d="M1 0.5 C1.5 8 4 11.5 18.5 11.5 M11 2.5 L19.5 11.5 L11 20" fill="none" stroke="#ffa300" stroke-width="2.6"/></svg>
<span class="t" id="t6" style="left:124.5px;top:247.10px;font-size:24px;color:#ffa300;font-weight:700;transform:scaleX(1.0065);">Caspian ALDERMAN</span>
<span class="t" id="t7" style="left:124.5px;top:289.18px;font-size:24.5px;color:#30314a;transform:scaleX(1.0383);">what should we replace?</span>
<span class="t" id="t8" style="left:124.5px;top:332.15px;font-size:21px;color:#b2b5ca;transform:scaleX(1.0342);">2 years ago</span>
<div style="left:64px;top:390px;width:466px;height:2px;background:#d6d7e2;"></div>
<div style="left:64px;top:392px;width:386px;height:80px;background:#ffffff;border-radius:0 0 0 5px;"></div>
<div style="left:450px;top:392px;width:80px;height:80px;background:#d6d7e2;border-radius:0 0 4px 0;"></div>
<svg style="left:450px;top:392px;" width="80" height="80" viewBox="0 0 80 80"><path d="M20.5 40.5 L35 53 L60.5 26" fill="none" stroke="#ffffff" stroke-width="3.4"/></svg>
<span class="t" id="t9" style="left:85px;top:415.35px;font-size:29px;color:#737373;transform:scaleX(0.9306);">Reply...</span>
<div style="left:64px;top:502px;width:466px;height:516px;background:#fafafa;border-radius:5px;"></div>
<svg style="left:64px;top:502px;border-radius:5px 5px 0 0;overflow:hidden;" width="466" height="262" viewBox="0 0 1920 1080"><rect width="1920" height="1080" fill="url(#cg2)"/><use href="#cityletters" /></svg>
<div style="left:64px;top:502px;width:164px;height:52px;background:rgba(0,0,0,0.6);border-radius:5px 0 0 0;"></div>
<span class="t" id="t10" style="left:85px;top:512.20px;font-size:28px;color:#ffffff;font-weight:700;transform:scaleX(1.0928);">00:00:02</span>
<div style="left:231.3px;top:626.8px;width:12.4px;height:12.4px;background:#eafff0;border-radius:50%;box-sizing:border-box;border:3.2px solid #5cc97f;"></div>
<div style="left:236.1px;top:631.6px;width:2.8px;height:2.8px;background:#3c4a40;border-radius:50%;"></div>
<div style="left:83.75px;top:783.75px;width:40px;height:40px;background:#ffa300;border-radius:50%;"></div>
<span class="t" id="t11" style="left:91px;top:794.07px;font-size:18.5px;color:#ffffff;transform:scaleX(1.0116);">CA</span>
<span class="t" id="t12" style="left:135px;top:793.35px;font-size:24px;color:#ffa300;font-weight:700;transform:scaleX(1.0044);">Caspian ALDERMAN</span>
<span class="t" id="t13" style="left:85px;top:834.92px;font-size:24.5px;color:#30314a;transform:scaleX(1.0215);">Can we change this?</span>
<span class="t" id="t14" style="left:85px;top:878.40px;font-size:21px;color:#b2b5ca;transform:scaleX(1.0389);">about a year ago</span>
<div style="left:64px;top:935.5px;width:466px;height:2px;background:#d6d7e2;"></div>
<div style="left:64px;top:937.5px;width:386px;height:80px;background:#ffffff;border-radius:0 0 0 5px;"></div>
<div style="left:450px;top:937.5px;width:80px;height:80px;background:#d6d7e2;border-radius:0 0 4px 0;"></div>
<svg style="left:450px;top:937.5px;" width="80" height="80" viewBox="0 0 80 80"><path d="M20.5 40.5 L35 53 L60.5 26" fill="none" stroke="#ffffff" stroke-width="3.4"/></svg>
<span class="t" id="t15" style="left:85px;top:961.35px;font-size:29px;color:#737373;transform:scaleX(0.9306);">Reply...</span>
<div style="left:64px;top:1048px;width:466px;height:420px;background:#4b4c5e;border-radius:5px 5px 0 0;"></div>
<div style="left:64px;top:1048px;width:466px;height:262px;background:linear-gradient(#8f8f9b,#6c6c79);border-radius:5px 5px 0 0;"></div>
<svg style="left:64px;top:1116px;overflow:hidden;" width="466" height="125" viewBox="0 0 466 125"><use href="#gcphoto" /></svg>
<div style="left:64px;top:1048px;width:164px;height:52px;background:#4d4d5a;border-radius:5px 0 0 0;"></div>
<span class="t" id="t16" style="left:85px;top:1057.20px;font-size:28px;color:#a9a9b9;font-weight:700;transform:scaleX(1.0928);">00:00:03</span>
<div style="left:83.75px;top:1330px;width:40px;height:40px;background:#b17e30;border-radius:50%;"></div>
<span class="t" id="t17" style="left:91px;top:1340.28px;font-size:18.5px;color:#d2c8b6;transform:scaleX(1.0116);">CA</span>
<span class="t" id="t18" style="left:135px;top:1339.60px;font-size:24px;color:#7c7d93;font-weight:700;transform:scaleX(1.0044);">Caspian ALDERMAN</span>
<span class="t" id="t19" style="left:85px;top:1381.67px;font-size:24.5px;color:#75768c;transform:scaleX(1.0366);">Love the transition here.</span>
<span class="t" id="t20" style="left:85px;top:1423.90px;font-size:21px;color:#6c6d83;transform:scaleX(1.0296);">2 years ago</span>
<div style="left:0px;top:136px;width:594px;height:100px;background:#3c3d4c;"></div>
<div style="left:0px;top:136px;width:100px;height:100px;background:#4b4c5f;"></div>
<svg style="left:138px;top:159px;" width="26" height="46" viewBox="0 0 26 46"><path d="M24.5 1 L2 23 L24.5 45" fill="none" stroke="#a9adc1" stroke-width="3"/></svg>
<span class="t" id="t21" style="left:211px;top:167.82px;font-size:30.5px;color:#ffffff;font-weight:700;transform:scaleX(0.9580);">The City v1 v2</span>
<svg style="left:520px;top:156px;" width="48" height="50" viewBox="0 0 48 50"><circle cx="22" cy="22" r="19" fill="none" stroke="#a9adc1" stroke-width="3.2"/><path d="M35.5 35.5 L46.5 47" stroke="#a9adc1" stroke-width="3.2"/></svg>
<div style="left:0px;top:1456px;width:594px;height:101.5px;background:linear-gradient(#1b1b22 0%,#24252e 35%,#292a35 75%);"></div>
<div style="left:20px;top:1476px;width:262px;height:62px;background:#6b6c87;border-radius:6px;"></div>
<span class="t" id="t22" style="left:42.5px;top:1492.08px;font-size:25.5px;color:#ffffff;font-weight:700;transform:scaleX(0.9527);">Upload new version</span>
<div style="left:314px;top:1476px;width:260px;height:62px;background:#5cc685;border-radius:6px;"></div>
<span class="t" id="t23" style="left:350.5px;top:1492.08px;font-size:25.5px;color:#ffffff;font-weight:700;transform:scaleX(0.9417);">Share this video</span>
</div>
<div id="source-monitor" class="sec">
<span class="t" id="t24" style="left:647.5px;top:94.45px;font-size:23px;color:#cacaca;-webkit-text-stroke:0.3px #cacaca;transform:scaleX(0.9504);">Source: (no clips)</span>
<svg style="left:837.6px;top:100px;" width="16.5" height="14" viewBox="0 0 16.5 14"><path d="M0 1 H16.5 M0 7 H16.5 M0 13 H16.5" stroke="#c8c8c8" stroke-width="1.8" fill="none"/></svg>
<svg style="left:661px;top:771px;" width="10" height="10" viewBox="0 0 10 10"><path d="M10 0 V10 L0 5 Z" fill="#5e5e5e"/></svg>
<span class="t" id="t25" style="left:665px;top:760.88px;font-size:27.2px;color:#727272;font-weight:700;transform:scaleX(1.0262);">00:00:00:00</span>
<div style="left:903.75px;top:756px;width:133.75px;height:33.5px;background:#2a2a2a;border-radius:5px;"></div>
<span class="t" id="t26" style="left:918.75px;top:762.45px;font-size:23px;color:#545454;-webkit-text-stroke:0.3px #545454;transform:scaleX(0.8538);">Page 1</span>
<svg style="left:1011px;top:770px;" width="15" height="8" viewBox="0 0 15 8"><path d="M0.7 0.7 L7.5 7.3 L14.3 0.7" fill="none" stroke="#505050" stroke-width="2.2"/></svg>
<svg style="left:1049.5px;top:763px;" width="13" height="20" viewBox="0 0 13 20"><path d="M0 0 L12.5 10 L0 20 Z" fill="#505050"/></svg>
<svg style="left:1123.75px;top:758px;" width="24" height="26" viewBox="0 0 24 26"><rect x="0" y="0" width="24" height="26" fill="#505050"/><rect x="1.5" y="1.8" width="2.6" height="2.8" fill="#222222"/><rect x="19.9" y="1.8" width="2.6" height="2.8" fill="#222222"/><rect x="1.5" y="6.7" width="2.6" height="2.8" fill="#222222"/><rect x="19.9" y="6.7" width="2.6" height="2.8" fill="#222222"/><rect x="1.5" y="11.6" width="2.6" height="2.8" fill="#222222"/><rect x="19.9" y="11.6" width="2.6" height="2.8" fill="#222222"/><rect x="1.5" y="16.5" width="2.6" height="2.8" fill="#222222"/><rect x="19.9" y="16.5" width="2.6" height="2.8" fill="#222222"/><rect x="1.5" y="21.4" width="2.6" height="2.8" fill="#222222"/><rect x="19.9" y="21.4" width="2.6" height="2.8" fill="#222222"/><rect x="7" y="11.5" width="10" height="2.6" fill="#222222"/></svg>
<svg style="left:1173.75px;top:763px;" width="28" height="18" viewBox="0 0 28 18"><path d="M0 9 H28 M5 6 V12 M9 2 V16 M13 5.5 V12.5 M17 0.5 V17.5 M21 4 V14 M24.5 6.5 V11.5" stroke="#505050" stroke-width="2.2" fill="none"/></svg>
<span class="t" id="t27" style="left:1534.5px;top:760.88px;font-size:27.2px;color:#727272;font-weight:700;transform:scaleX(1.0329);">00:00:00:00</span>
<svg style="left:809.5px;top:892px;" width="18.5" height="20" viewBox="0 0 18.5 20"><path d="M0 0 H18.5 V12 L9.25 20 L0 12 Z" fill="#4e4e4e"/></svg>
<svg style="left:888.5px;top:888px;" width="8" height="26" viewBox="0 0 8 26"><path d="M7.5 1.5 H4.8 V10.5 L1.2 13 L4.8 15.5 V24.5 H7.5" fill="none" stroke="#4e4e4e" stroke-width="3" stroke-linejoin="miter"/></svg>
<svg style="left:953.5px;top:888px;" width="8" height="26" viewBox="0 0 8 26"><path d="M0.5 1.5 H3.2 V10.5 L6.8 13 L3.2 15.5 V24.5 H0.5" fill="none" stroke="#4e4e4e" stroke-width="3"/></svg>
<svg style="left:1032.5px;top:888px;" width="30" height="26" viewBox="0 0 30 26"><path d="M7.5 1.5 H4.8 V10.5 L1.2 13 L4.8 15.5 V24.5 H7.5" fill="none" stroke="#4e4e4e" stroke-width="3"/><path d="M9.5 13 L19.5 5 V10.8 H29.5 V15.2 H19.5 V21 Z" fill="#4e4e4e"/></svg>
<svg style="left:1103px;top:892px;" width="25" height="20" viewBox="0 0 25 20"><path d="M17.5 0 V20 L0 10 Z" fill="#4e4e4e"/><rect x="20.5" y="0" width="4.5" height="20" fill="#4e4e4e"/></svg>
<svg style="left:1174px;top:890px;" width="24" height="22" viewBox="0 0 24 22"><path d="M1.5 1.5 L22.5 11 L1.5 20.5 Z" fill="#4e4e4e" stroke="#4e4e4e" stroke-width="3" stroke-linejoin="round"/></svg>
<svg style="left:1245.5px;top:892px;" width="25" height="20" viewBox="0 0 25 20"><path d="M7.5 0 V20 L25 10 Z" fill="#4e4e4e"/><rect x="0" y="0" width="4.5" height="20" fill="#4e4e4e"/></svg>
<svg style="left:1309px;top:888px;" width="30" height="26" viewBox="0 0 30 26"><path d="M22.5 1.5 H25.2 V10.5 L28.8 13 L25.2 15.5 V24.5 H22.5" fill="none" stroke="#4e4e4e" stroke-width="3"/><path d="M20.5 13 L10.5 5 V10.8 H0.5 V15.2 H10.5 V21 Z" fill="#4e4e4e"/></svg>
<svg style="left:1392px;top:888px;" width="38" height="24" viewBox="0 0 38 24"><rect x="0" y="11" width="14" height="13" fill="#4e4e4e"/><rect x="24" y="11" width="14" height="13" fill="#4e4e4e"/><rect x="11.5" y="1" width="16" height="13.5" fill="#222222" stroke="#4e4e4e" stroke-width="2"/><path d="M14.8 5 H24.2 L19.5 11 Z" fill="#4e4e4e"/><path d="M30 14 L36 17.8 L30 21.6 Z" fill="#222222"/></svg>
<svg style="left:1462px;top:888px;" width="38" height="24" viewBox="0 0 38 24"><rect x="0" y="13" width="38" height="11" fill="#4e4e4e"/><rect x="11.5" y="1" width="16" height="13.5" fill="#222222" stroke="#4e4e4e" stroke-width="2"/><path d="M14.8 5 H24.2 L19.5 11 Z" fill="#4e4e4e"/><rect x="11.5" y="16.5" width="16" height="2" fill="#222222"/></svg>
<svg style="left:1538px;top:890px;" width="28" height="22" viewBox="0 0 28 22"><path d="M2 4 H8 L10 0 H18 L20 4 H26 Q28 4 28 6 V20 Q28 22 26 22 H2 Q0 22 0 20 V6 Q0 4 2 4 Z" fill="#4e4e4e"/><circle cx="14" cy="13" r="6.6" fill="#222222"/><circle cx="14" cy="13" r="4.2" fill="#4e4e4e"/></svg>
<svg style="left:1633.75px;top:882.5px;" width="20" height="15" viewBox="0 0 20 15"><path d="M1.5 1 L8.5 7.5 L1.5 14 M11 1 L18 7.5 L11 14" fill="none" stroke="#4e4e4e" stroke-width="2.6"/></svg>
<svg style="left:1672px;top:894px;" width="22" height="22" viewBox="0 0 22 22"><path d="M11 0 V22 M0 11 H22" stroke="#d2d2d2" stroke-width="5"/></svg>
</div>
<div id="program-monitor" class="sec">
<span class="t" id="t28" style="left:1778.75px;top:94.20px;font-size:23px;color:#c8c8c8;-webkit-text-stroke:0.3px #c8c8c8;transform:scaleX(0.9227);">Program: Sequence 01</span>
<svg style="left:2020px;top:100px;" width="16.5" height="14" viewBox="0 0 16.5 14"><path d="M0 1 H16.5 M0 7 H16.5 M0 13 H16.5" stroke="#c8c8c8" stroke-width="1.8" fill="none"/></svg>
<svg style="left:1816px;top:160px;overflow:hidden;" width="996.5" height="560" viewBox="0 0 1920 1080"><use href="#cityimg" /></svg>
<span class="t" id="t29" style="left:1795px;top:732.68px;font-size:27.2px;color:#52a2ef;font-weight:700;transform:scaleX(1.0262);">00:00:02:12</span>
<div style="left:1998.75px;top:728.75px;width:132.5px;height:32.5px;background:#1b1b1b;box-sizing:border-box;border:1.5px solid #383838;border-radius:5px;"></div>
<span class="t" id="t30" style="left:2013px;top:734.20px;font-size:23px;color:#d4d4d4;-webkit-text-stroke:0.3px #d4d4d4;transform:scaleX(0.8900);">Fit</span>
<svg style="left:2105.25px;top:742.25px;" width="15" height="8" viewBox="0 0 15 8"><path d="M0.7 0.7 L7.5 7.3 L14.3 0.7" fill="none" stroke="#c8c8c8" stroke-width="2.2"/></svg>
<div style="left:2452.5px;top:728.75px;width:133px;height:32.5px;background:#1b1b1b;box-sizing:border-box;border:1.5px solid #383838;border-radius:5px;"></div>
<span class="t" id="t31" style="left:2467px;top:734.20px;font-size:23px;color:#d4d4d4;-webkit-text-stroke:0.3px #d4d4d4;transform:scaleX(0.9692);">1/2</span>
<svg style="left:2559.5px;top:742.25px;" width="15" height="8" viewBox="0 0 15 8"><path d="M0.7 0.7 L7.5 7.3 L14.3 0.7" fill="none" stroke="#c8c8c8" stroke-width="2.2"/></svg>
<svg style="left:2188px;top:732px;" width="26" height="28" viewBox="0 0 26 28"><path d="M2.5 1 H23.5 Q25 1 25 2.5 V16 L13 27 L1 16 V2.5 Q1 1 2.5 1 Z" fill="#6c6c6c" stroke="#c9c9c9" stroke-width="1.6"/></svg>
<svg style="left:2609.5px;top:730px;" width="29" height="29" viewBox="0 0 29 29"><path d="M10 10 L25 25" stroke="#b2b2b2" stroke-width="6.4" stroke-linecap="round"/><circle cx="8.3" cy="8.3" r="7.8" fill="#b2b2b2"/><rect x="-2.7" y="-13" width="5.4" height="11" transform="translate(7.5,7.5) rotate(-45)" fill="#222222"/></svg>
<span class="t" id="t32" style="left:2662.5px;top:732.68px;font-size:27.2px;color:#ababab;font-weight:700;transform:scaleX(1.0295);">00:00:06:23</span>
<svg style="left:1910px;top:776px;" width="14.1" height="24.2" viewBox="0 0 14.1 24.2"><path d="M0 0 H14.1 V17.9 L7.05 24.2 L0 17.9 Z" fill="#7a8b42"/></svg>
<svg style="left:1973px;top:776px;" width="14.1" height="24.2" viewBox="0 0 14.1 24.2"><path d="M0 0 H14.1 V17.9 L7.05 24.2 L0 17.9 Z" fill="#7a8b42"/></svg>
<svg style="left:2153.9px;top:776px;" width="14.1" height="24.2" viewBox="0 0 14.1 24.2"><path d="M0 0 H14.1 V17.9 L7.05 24.2 L0 17.9 Z" fill="#7a8b42"/></svg>
<svg style="left:2273.8px;top:776px;" width="14.1" height="24.2" viewBox="0 0 14.1 24.2"><path d="M0 0 H14.1 V17.9 L7.05 24.2 L0 17.9 Z" fill="#7a8b42"/></svg>
<svg style="left:2465.75px;top:776px;" width="14.1" height="24.2" viewBox="0 0 14.1 24.2"><path d="M0 0 H14.1 V17.9 L7.05 24.2 L0 17.9 Z" fill="#7a8b42"/></svg>
<svg style="left:1780px;top:819px;" width="1050" height="21" viewBox="0 0 1050 21"><rect x="-2.0" y="0" width="2" height="21" fill="#5b5b5b"/><rect x="29.0" y="12" width="2" height="9" fill="#5b5b5b"/><rect x="59.0" y="12" width="2" height="9" fill="#5b5b5b"/><rect x="90.0" y="12" width="2" height="9" fill="#5b5b5b"/><rect x="120.0" y="12" width="2" height="9" fill="#5b5b5b"/><rect x="151.0" y="0" width="2" height="21" fill="#5b5b5b"/><rect x="181.0" y="12" width="2" height="9" fill="#5b5b5b"/><rect x="212.0" y="12" width="2" height="9" fill="#5b5b5b"/><rect x="242.0" y="12" width="2" height="9" fill="#5b5b5b"/><rect x="273.0" y="12" width="2" height="9" fill="#5b5b5b"/><rect x="303.0" y="0" width="2" height="21" fill="#5b5b5b"/><rect x="334.0" y="12" width="2" height="9" fill="#5b5b5b"/><rect x="364.0" y="12" width="2" height="9" fill="#5b5b5b"/><rect x="395.0" y="12" width="2" height="9" fill="#5b5b5b"/><rect x="425.0" y="12" width="2" height="9" fill="#5b5b5b"/><rect x="456.0" y="0" width="2" height="21" fill="#5b5b5b"/><rect x="486.0" y="12" width="2" height="9" fill="#5b5b5b"/><rect x="516.0" y="12" width="2" height="9" fill="#5b5b5b"/><rect x="547.0" y="12" width="2" height="9" fill="#5b5b5b"/><rect x="577.0" y="12" width="2" height="9" fill="#5b5b5b"/><rect x="608.0" y="0" width="2" height="21" fill="#5b5b5b"/><rect x="638.0" y="12" width="2" height="9" fill="#5b5b5b"/><rect x="669.0" y="12" width="2" height="9" fill="#5b5b5b"/><rect x="699.0" y="12" width="2" height="9" fill="#5b5b5b"/><rect x="730.0" y="12" width="2" height="9" fill="#5b5b5b"/><rect x="760.0" y="0" width="2" height="21" fill="#5b5b5b"/><rect x="791.0" y="12" width="2" height="9" fill="#5b5b5b"/><rect x="821.0" y="12" width="2" height="9" fill="#5b5b5b"/><rect x="852.0" y="12" width="2" height="9" fill="#5b5b5b"/><rect x="882.0" y="12" width="2" height="9" fill="#5b5b5b"/><rect x="913.0" y="0" width="2" height="21" fill="#5b5b5b"/><rect x="943.0" y="12" width="2" height="9" fill="#5b5b5b"/><rect x="974.0" y="12" width="2" height="9" fill="#5b5b5b"/><rect x="1004.0" y="12" width="2" height="9" fill="#5b5b5b"/><rect x="1034.0" y="12" width="2" height="9" fill="#5b5b5b"/></svg>
<svg style="left:2150px;top:813.9px;" width="22" height="24.3" viewBox="0 0 22 24.3"><path d="M0 0 H22 V15.4 L14 24.2 H8.4 L0 15.4 Z" fill="#4a90e2"/><rect x="10" y="18" width="2.1" height="6.2" fill="#0c0c0c"/></svg>
<div style="left:1783px;top:842px;width:1064px;height:22px;background:#313131;border-radius:11px;"></div>
<div style="left:1783.75px;top:843px;width:20px;height:20px;background:#2a2a2a;border-radius:50%;box-sizing:border-box;border:3.2px solid #a4a4a4;"></div>
<div style="left:2825.75px;top:843px;width:20px;height:20px;background:#2a2a2a;border-radius:50%;box-sizing:border-box;border:3.2px solid #a4a4a4;"></div>
<svg style="left:1938px;top:892px;" width="18.5" height="20" viewBox="0 0 18.5 20"><path d="M0 0 H18.5 V12 L9.25 20 L0 12 Z" fill="#b2b2b2"/></svg>
<svg style="left:2016.5px;top:888px;" width="8" height="26" viewBox="0 0 8 26"><path d="M7.5 1.5 H4.8 V10.5 L1.2 13 L4.8 15.5 V24.5 H7.5" fill="none" stroke="#b2b2b2" stroke-width="3" stroke-linejoin="miter"/></svg>
<svg style="left:2081px;top:888px;" width="8" height="26" viewBox="0 0 8 26"><path d="M0.5 1.5 H3.2 V10.5 L6.8 13 L3.2 15.5 V24.5 H0.5" fill="none" stroke="#b2b2b2" stroke-width="3"/></svg>
<svg style="left:2160px;top:888px;" width="30" height="26" viewBox="0 0 30 26"><path d="M7.5 1.5 H4.8 V10.5 L1.2 13 L4.8 15.5 V24.5 H7.5" fill="none" stroke="#b2b2b2" stroke-width="3"/><path d="M9.5 13 L19.5 5 V10.8 H29.5 V15.2 H19.5 V21 Z" fill="#b2b2b2"/></svg>
<svg style="left:2231px;top:892px;" width="25" height="20" viewBox="0 0 25 20"><path d="M17.5 0 V20 L0 10 Z" fill="#b2b2b2"/><rect x="20.5" y="0" width="4.5" height="20" fill="#b2b2b2"/></svg>
<svg style="left:2302px;top:890px;" width="24" height="22" viewBox="0 0 24 22"><path d="M1.5 1.5 L22.5 11 L1.5 20.5 Z" fill="#b2b2b2" stroke="#b2b2b2" stroke-width="3" stroke-linejoin="round"/></svg>
<svg style="left:2373.5px;top:892px;" width="25" height="20" viewBox="0 0 25 20"><path d="M7.5 0 V20 L25 10 Z" fill="#b2b2b2"/><rect x="0" y="0" width="4.5" height="20" fill="#b2b2b2"/></svg>
<svg style="left:2437.5px;top:888px;" width="30" height="26" viewBox="0 0 30 26"><path d="M22.5 1.5 H25.2 V10.5 L28.8 13 L25.2 15.5 V24.5 H22.5" fill="none" stroke="#b2b2b2" stroke-width="3"/><path d="M20.5 13 L10.5 5 V10.8 H0.5 V15.2 H10.5 V21 Z" fill="#b2b2b2"/></svg>
<svg style="left:2520px;top:888px;" width="38" height="24" viewBox="0 0 38 24"><rect x="0" y="11" width="14" height="13" fill="#b2b2b2"/><rect x="24" y="11" width="14" height="13" fill="#b2b2b2"/><rect x="11.5" y="1" width="16" height="13.5" fill="#222222" stroke="#b2b2b2" stroke-width="2"/><path d="M14.8 11 H24.2 L19.5 5 Z" fill="#b2b2b2"/></svg>
<svg style="left:2590px;top:888px;" width="38" height="24" viewBox="0 0 38 24"><rect x="0" y="11" width="14" height="13" fill="#b2b2b2"/><rect x="24" y="11" width="14" height="13" fill="#b2b2b2"/><rect x="11.5" y="1" width="16" height="13.5" fill="#222222" stroke="#b2b2b2" stroke-width="2"/><path d="M14.8 11 H24.2 L19.5 5 Z" fill="#b2b2b2"/><path d="M2 14 L8 17.8 L2 21.6 Z M36 14 L30 17.8 L36 21.6 Z" fill="#222222"/></svg>
<svg style="left:2666px;top:890px;" width="28" height="22" viewBox="0 0 28 22"><path d="M2 4 H8 L10 0 H18 L20 4 H26 Q28 4 28 6 V20 Q28 22 26 22 H2 Q0 22 0 20 V6 Q0 4 2 4 Z" fill="#b2b2b2"/><circle cx="14" cy="13" r="6.6" fill="#222222"/><circle cx="14" cy="13" r="4.2" fill="#b2b2b2"/></svg>
<svg style="left:2762px;top:882.5px;" width="20" height="15" viewBox="0 0 20 15"><path d="M1.5 1 L8.5 7.5 L1.5 14 M11 1 L18 7.5 L11 14" fill="none" stroke="#c4c4c4" stroke-width="2.6"/></svg>
<svg style="left:2800px;top:894px;" width="22" height="22" viewBox="0 0 22 22"><path d="M11 0 V22 M0 11 H22" stroke="#d2d2d2" stroke-width="5"/></svg>
</div>
<div id="project-panel" class="sec">
<span class="t" id="t33" style="left:648.75px;top:965.95px;font-size:23px;color:#dadada;-webkit-text-stroke:0.3px #dadada;transform:scaleX(0.9747);">Project: Untitled</span>
<svg style="left:829.5px;top:972px;" width="16.5" height="14" viewBox="0 0 16.5 14"><path d="M0 1 H16.5 M0 7 H16.5 M0 13 H16.5" stroke="#c8c8c8" stroke-width="1.8" fill="none"/></svg>
<div style="left:646px;top:998px;width:200px;height:4px;background:#c9c9c9;"></div>
<span class="t" id="t34" style="left:891px;top:965.95px;font-size:23px;color:#a2a2a2;-webkit-text-stroke:0.3px #a2a2a2;transform:scaleX(0.9518);">Media Browser</span>
<div style="left:1048.5px;top:959px;width:1.3px;height:38px;background:#3c3c3c;"></div>
<svg style="left:1100px;top:968.5px;" width="20" height="15" viewBox="0 0 20 15"><path d="M1.5 1 L8.5 7.5 L1.5 14 M11 1 L18 7.5 L11 14" fill="none" stroke="#c6c6c6" stroke-width="2.8"/></svg>
<svg style="left:650px;top:1028px;" width="32" height="24" viewBox="0 0 32 24"><path d="M0 2 H9 V5 H32 V24 H0 Z" fill="#3d3d3d"/><path d="M0 1 H9" stroke="#3d3d3d" stroke-width="1.5"/><path d="M12 10 L18 15 H14 V18 H22 V20.5 H10.5 V15 H6.5 Z" fill="#222"/></svg>
<span class="t" id="t35" style="left:708.75px;top:1026.45px;font-size:23px;color:#aaaaaa;-webkit-text-stroke:0.3px #aaaaaa;transform:scaleX(0.9865);">Untitled.prproj</span>
<div style="left:650.5px;top:1070.5px;width:385px;height:41px;background:#141414;box-sizing:border-box;border:1.5px solid #2f2f2f;border-radius:5px;"></div>
<svg style="left:661px;top:1080px;" width="25" height="23" viewBox="0 0 25 23"><circle cx="15" cy="9" r="7.6" fill="none" stroke="#b4b4b4" stroke-width="2.4"/><path d="M9.6 14.4 L1.2 22" stroke="#b4b4b4" stroke-width="3"/></svg>
<svg style="left:1072px;top:1078px;" width="28" height="22" viewBox="0 0 28 22"><path d="M0 3.5 H9 V4.5 H28 V22 H0 Z" fill="#bababa"/><path d="M0 0.8 H9" stroke="#bababa" stroke-width="1.5"/><circle cx="16" cy="11.5" r="4.2" fill="none" stroke="#222" stroke-width="2"/><path d="M13 14.5 L9 18.5" stroke="#222" stroke-width="2.2"/></svg>
<div style="left:650.5px;top:1134.5px;width:453.5px;height:339px;background:#222222;box-sizing:border-box;border:1.3px solid #353535;"></div>
<div style="left:652.5px;top:1136px;width:221.5px;height:186px;background:#1d1d1d;"></div>
<div style="left:878.5px;top:1136px;width:223.5px;height:186px;background:#1d1d1d;"></div>
<svg style="left:672px;top:1154px;overflow:hidden;" width="182" height="104" viewBox="0 0 184 104"><defs><linearGradient id="pga" x1="0" y1="0" x2="0" y2="1"><stop offset="0" stop-color="#ffd400"/><stop offset="0.5" stop-color="#ffaa00"/><stop offset="1" stop-color="#ff7e00"/></linearGradient><linearGradient id="psa" x1="0" y1="0" x2="0" y2="1"><stop offset="0" stop-color="#b9a9ad"/><stop offset="0.45" stop-color="#d9c1b2"/><stop offset="0.7" stop-color="#c9a874"/><stop offset="1" stop-color="#6f5c45"/></linearGradient><linearGradient id="pfa" x1="0" y1="0" x2="1" y2="0"><stop offset="0" stop-color="#ffa800" stop-opacity="1"/><stop offset="1" stop-color="#c08a30" stop-opacity="0.55"/></linearGradient></defs><rect width="184" height="104" fill="url(#pga)"/><rect x="91" y="0" width="93" height="104" fill="url(#psa)"/><path d="M91 58 H100 V50 H108 V60 H116 V44 H124 V56 H132 V48 H140 V40 H147 V54 H156 V46 H164 V58 H172 V50 H184 V86 H91 Z" fill="#8a7a55" opacity="0.85"/><path d="M91 70 H104 V62 H112 V72 H126 V60 H134 V74 H150 V64 H160 V76 H184 V90 H91 Z" fill="#6d6248" opacity="0.8"/><path d="M91 86 L184 78 V104 H91 Z" fill="#5d5348"/><path d="M91 92 L184 82 M91 98 L184 90" stroke="#8a6a4a" stroke-width="1.5"/><path d="M100 0 L92 104" stroke="#6e6470" stroke-width="0.8" opacity="0.7"/><path d="M116 0 L112 104" stroke="#6e6470" stroke-width="0.8" opacity="0.7"/><path d="M132 0 L132 104" stroke="#6e6470" stroke-width="0.8" opacity="0.7"/><path d="M148 0 L152 104" stroke="#6e6470" stroke-width="0.8" opacity="0.7"/><path d="M164 0 L172 104" stroke="#6e6470" stroke-width="0.8" opacity="0.7"/><path d="M180 0 L192 104" stroke="#6e6470" stroke-width="0.8" opacity="0.7"/><path d="M91 18 L184 6 M91 40 L184 30 M91 60 L184 56" stroke="#6e6470" stroke-width="0.8" opacity="0.6"/><path d="M110 26 H146 V38 H134 V80 H122 V38 H110 Z" fill="#ffd000" opacity="0.88"/><path d="M160 26 H172 V46 H184 V58 H172 V80 H160 Z" fill="#ffd600" opacity="0.9"/><rect x="72" y="0" width="20" height="104" fill="url(#pfa)"/><rect x="72" y="56" width="19" height="48" fill="#9a7a40" opacity="0.35"/></svg>
<svg style="left:898px;top:1154px;overflow:hidden;" width="184" height="104" viewBox="0 0 184 104"><defs><linearGradient id="pgb" x1="0" y1="0" x2="0" y2="1"><stop offset="0" stop-color="#ffd400"/><stop offset="0.5" stop-color="#ffaa00"/><stop offset="1" stop-color="#ff7e00"/></linearGradient><linearGradient id="psb" x1="0" y1="0" x2="0" y2="1"><stop offset="0" stop-color="#b9a9ad"/><stop offset="0.45" stop-color="#d9c1b2"/><stop offset="0.7" stop-color="#c9a874"/><stop offset="1" stop-color="#6f5c45"/></linearGradient><linearGradient id="pfb" x1="0" y1="0" x2="1" y2="0"><stop offset="0" stop-color="#ffa800" stop-opacity="1"/><stop offset="1" stop-color="#c08a30" stop-opacity="0.55"/></linearGradient></defs><rect width="184" height="104" fill="url(#pgb)"/><rect x="91" y="0" width="93" height="104" fill="url(#psb)"/><path d="M91 58 H100 V50 H108 V60 H116 V44 H124 V56 H132 V48 H140 V40 H147 V54 H156 V46 H164 V58 H172 V50 H184 V86 H91 Z" fill="#8a7a55" opacity="0.85"/><path d="M91 70 H104 V62 H112 V72 H126 V60 H134 V74 H150 V64 H160 V76 H184 V90 H91 Z" fill="#6d6248" opacity="0.8"/><path d="M91 86 L184 78 V104 H91 Z" fill="#5d5348"/><path d="M91 92 L184 82 M91 98 L184 90" stroke="#8a6a4a" stroke-width="1.5"/><path d="M100 0 L92 104" stroke="#6e6470" stroke-width="0.8" opacity="0.7"/><path d="M116 0 L112 104" stroke="#6e6470" stroke-width="0.8" opacity="0.7"/><path d="M132 0 L132 104" stroke="#6e6470" stroke-width="0.8" opacity="0.7"/><path d="M148 0 L152 104" stroke="#6e6470" stroke-width="0.8" opacity="0.7"/><path d="M164 0 L172 104" stroke="#6e6470" stroke-width="0.8" opacity="0.7"/><path d="M180 0 L192 104" stroke="#6e6470" stroke-width="0.8" opacity="0.7"/><path d="M91 18 L184 6 M91 40 L184 30 M91 60 L184 56" stroke="#6e6470" stroke-width="0.8" opacity="0.6"/><path d="M110 26 H146 V38 H134 V80 H122 V38 H110 Z" fill="#ffd000" opacity="0.88"/><path d="M160 26 H172 V46 H184 V58 H172 V80 H160 Z" fill="#ffd600" opacity="0.9"/><rect x="72" y="0" width="20" height="104" fill="url(#pfb)"/><rect x="72" y="56" width="19" height="48" fill="#9a7a40" opacity="0.35"/></svg>
<svg style="left:821px;top:1229.5px;" width="31.5" height="27" viewBox="0 0 31.5 27"><rect x="0" y="0" width="31.5" height="27" fill="#15151d"/><rect x="1.2" y="1.2" width="29.1" height="24.6" fill="none" stroke="#4a90e2" stroke-width="2"/><rect x="4.5" y="7.5" width="6.2" height="12" fill="#4a90e2"/><rect x="12.6" y="7.5" width="6.2" height="12" fill="#4a90e2"/><rect x="20.7" y="7.5" width="6.2" height="12" fill="#4a90e2"/><rect x="4.5" y="3.8" width="2.2" height="2.2" fill="#4a90e2"/><rect x="4.5" y="21" width="2.2" height="2.2" fill="#4a90e2"/><rect x="8.5" y="3.8" width="2.2" height="2.2" fill="#4a90e2"/><rect x="8.5" y="21" width="2.2" height="2.2" fill="#4a90e2"/><rect x="12.5" y="3.8" width="2.2" height="2.2" fill="#4a90e2"/><rect x="12.5" y="21" width="2.2" height="2.2" fill="#4a90e2"/><rect x="16.5" y="3.8" width="2.2" height="2.2" fill="#4a90e2"/><rect x="16.5" y="21" width="2.2" height="2.2" fill="#4a90e2"/><rect x="20.5" y="3.8" width="2.2" height="2.2" fill="#4a90e2"/><rect x="20.5" y="21" width="2.2" height="2.2" fill="#4a90e2"/><rect x="24.5" y="3.8" width="2.2" height="2.2" fill="#4a90e2"/><rect x="24.5" y="21" width="2.2" height="2.2" fill="#4a90e2"/></svg>
<svg style="left:1048.5px;top:1229.5px;" width="31.5" height="27" viewBox="0 0 31.5 27"><rect x="0" y="0" width="31.5" height="27" fill="#15151d"/><rect x="1.2" y="1.2" width="29.1" height="24.6" fill="none" stroke="#4a90e2" stroke-width="2"/><rect x="13" y="5.5" width="6" height="3" fill="#4a90e2"/><rect x="14.8" y="5.5" width="2.4" height="17" fill="#4a90e2"/><rect x="9" y="12" width="4" height="3.6" fill="#4a90e2"/><rect x="19" y="13" width="8" height="3.4" fill="#4a90e2"/><rect x="4.5" y="18" width="9" height="4.4" fill="#4a90e2"/><rect x="19" y="18.6" width="5" height="3.8" fill="#4a90e2"/></svg>
<span class="t" id="t36" style="left:670px;top:1281.17px;font-size:19.8px;color:#b4b4b4;-webkit-text-stroke:0.3px #b4b4b4;transform:scaleX(0.9015);">The City v1 [v2]...</span>
<span class="t" id="t37" style="left:820px;top:1281.17px;font-size:19.8px;color:#b4b4b4;-webkit-text-stroke:0.3px #b4b4b4;transform:scaleX(0.8957);">6:23</span>
<span class="t" id="t38" style="left:896px;top:1281.17px;font-size:19.8px;color:#b4b4b4;-webkit-text-stroke:0.3px #b4b4b4;transform:scaleX(0.8813);">Sequence 01</span>
<span class="t" id="t39" style="left:1048px;top:1281.17px;font-size:19.8px;color:#b4b4b4;-webkit-text-stroke:0.3px #b4b4b4;transform:scaleX(0.8957);">6:23</span>
<svg style="left:652px;top:1513px;" width="28" height="27" viewBox="0 0 28 27"><path d="M19.5 0.5 L27 7.5 L10 24 L2.5 17 Z" fill="#3fa535"/><path d="M5 16.5 L2 25.5 L10.8 22.6" fill="none" stroke="#3fa535" stroke-width="2"/></svg>
<svg style="left:710px;top:1516px;" width="32" height="20" viewBox="0 0 32 20"><rect x="0" y="0" width="9.5" height="8" fill="#b9b9b9"/><rect x="0" y="12" width="9.5" height="8" fill="#b9b9b9"/><rect x="14" y="3" width="18" height="2.2" fill="#b9b9b9"/><rect x="14" y="15" width="18" height="2.2" fill="#b9b9b9"/></svg>
<div style="left:775.75px;top:1516px;width:20.25px;height:15px;background:#4a90e2;"></div>
<div style="left:775.75px;top:1533.75px;width:20.25px;height:2.25px;background:#4a90e2;"></div>
<svg style="left:828px;top:1516px;" width="36" height="20" viewBox="0 0 36 20"><rect x="0" y="0" width="20" height="12" fill="#8e8e8e"/><rect x="8" y="4" width="20" height="12" fill="#a5a5a5" stroke="#222" stroke-width="1.2"/><rect x="16" y="8" width="20" height="12" fill="#c0c0c0" stroke="#222" stroke-width="1.2"/></svg>
<div style="left:914.5px;top:1523.75px;width:111.5px;height:4.2px;background:#474747;border-radius:2px;"></div>
<div style="left:889.8px;top:1515.8px;width:20.4px;height:20.4px;background:#222;border-radius:50%;box-sizing:border-box;border:4px solid #8e8e8e;"></div>
<svg style="left:1066px;top:1514px;" width="28" height="24" viewBox="0 0 28 24"><rect x="0" y="0" width="28" height="3.6" fill="#c2c2c2"/><rect x="0" y="10" width="24" height="3.6" fill="#c2c2c2"/><rect x="0" y="20" width="20" height="3.6" fill="#c2c2c2"/></svg>
<svg style="left:1117px;top:1521px;" width="10" height="9" viewBox="0 0 10 9"><path d="M0.5 0.8 L9 7.5" stroke="#c2c2c2" stroke-width="1.8"/></svg>
</div>
<div id="tools-panel" class="sec">
<div style="left:1156px;top:982.5px;width:55px;height:50.5px;background:#141414;box-sizing:border-box;border:1.5px solid #2e2e2e;border-radius:5px;"></div>
<svg style="left:1174px;top:992px;" width="26" height="34" viewBox="0 0 26 34"><path d="M0 0 L24.2 23.6 L9.8 24.5 L0 34.3 Z" fill="#4a90e2"/></svg>
<svg style="left:1165.5px;top:1050px;" width="35" height="23" viewBox="0 0 35 23"><rect x="1.2" y="1.2" width="19" height="20" fill="none" stroke="#bbbbbb" stroke-width="2.4" stroke-dasharray="5 3.2"/><path d="M12 8.5 H23 V3 L35 11.2 L23 19.5 V14 H12 Z" fill="#bbbbbb" stroke="#222" stroke-width="1.2"/></svg>
<svg style="left:1200.9px;top:1077.6px;" width="6.6" height="6.6" viewBox="0 0 6.6 6.6"><path d="M6.6 0 V6.6 H0 Z" fill="#8c8c8c"/></svg>
<svg style="left:1164.5px;top:1101px;" width="39" height="29" viewBox="0 0 39 29"><rect x="17.5" y="0" width="4" height="29" fill="#bbbbbb"/><path d="M0 14.5 L12.5 7 V12.3 H16 V16.7 H12.5 V22 Z M39 14.5 L26.5 7 V12.3 H23 V16.7 H26.5 V22 Z" fill="#bbbbbb"/></svg>
<svg style="left:1200.9px;top:1131.6px;" width="6.6" height="6.6" viewBox="0 0 6.6 6.6"><path d="M6.6 0 V6.6 H0 Z" fill="#8c8c8c"/></svg>
<svg style="left:1168px;top:1155.5px;" width="32" height="31" viewBox="0 0 32 31"><g transform="rotate(38 16 15.5)"><rect x="-1" y="7.5" width="34" height="16" rx="2" fill="#bbbbbb"/><path d="M7 15.5 H25" stroke="#222" stroke-width="1.6"/><path d="M7.5 13.5 L10 15.5 L7.5 17.5 Z M13 13.4 L16 17.6 L19 13.4 Z M13 17.6 L16 13.4 L19 17.6 Z M24.5 13.5 L22 15.5 L24.5 17.5 Z" fill="#222"/><path d="M-1 13 a2.5 2.5 0 0 0 0 5 M33 13 a2.5 2.5 0 0 1 0 5" fill="#222"/></g></svg>
<svg style="left:1163.75px;top:1210px;" width="41" height="29" viewBox="0 0 41 29"><rect x="0" y="0" width="4" height="29" fill="#bbbbbb"/><rect x="37" y="0" width="4" height="29" fill="#bbbbbb"/><path d="M7 14.5 L15 8 V12.8 H26 V8 L34 14.5 L26 21 V16.2 H15 V21 Z" fill="#bbbbbb"/></svg>
<svg style="left:1200.9px;top:1239.6px;" width="6.6" height="6.6" viewBox="0 0 6.6 6.6"><path d="M6.6 0 V6.6 H0 Z" fill="#8c8c8c"/></svg>
<svg style="left:1167px;top:1262px;" width="33" height="33" viewBox="0 0 33 33"><g transform="translate(16.5 16.5) rotate(45) scale(1.08) translate(-16 -15.5)"><rect x="10" y="-3.5" width="12" height="8" fill="#bbbbbb"/><path d="M9.5 6.5 H22.5 L25 18.5 L16 33.5 L7 18.5 Z" fill="#bbbbbb"/><path d="M16 33.5 V21.5" stroke="#222" stroke-width="1.7"/><circle cx="16" cy="20" r="2.3" fill="#222"/></g></svg>
<div style="left:1168px;top:1318px;width:32px;height:27.5px;background:#484848;box-sizing:border-box;border:2.2px solid #c2c2c2;"></div>
<svg style="left:1200.9px;top:1347.6px;" width="6.6" height="6.6" viewBox="0 0 6.6 6.6"><path d="M6.6 0 V6.6 H0 Z" fill="#8c8c8c"/></svg>
<svg style="left:1168px;top:1370px;" width="32" height="33" viewBox="0 0 32 33"><path d="M9 33 C5 27 3 23 0.5 18.5 C-0.5 16 2.5 14.5 4.5 17 L8.5 22 L6.5 6 C6.3 3.2 9.8 3 10.3 5.8 L12.5 17 L13 2.5 C13.2 -0.4 16.8 -0.4 17 2.5 L17.5 17 L20.3 4.5 C21 1.8 24.4 2.5 24 5.3 L22.3 18.5 L26.5 10.5 C27.8 8 31 9.4 30 12.2 C28 18 27 22 25.5 26 C24.8 28.5 22.5 33.6 15.5 33.6 C12.5 33.6 10.5 33.4 9 33 Z" fill="#bbbbbb"/></svg>
<svg style="left:1200.9px;top:1402.6px;" width="6.6" height="6.6" viewBox="0 0 6.6 6.6"><path d="M6.6 0 V6.6 H0 Z" fill="#8c8c8c"/></svg>
<svg style="left:1169.9px;top:1425.6px;" width="28.2" height="29" viewBox="0 0 28.2 29"><path d="M0 0 H28.2 V8.4 H24.4 V4.3 H16.9 V24.4 H20.3 V29 H8.1 V24.4 H11.4 V4.3 H3.8 V8.4 H0 Z" fill="#bbbbbb"/></svg>
<svg style="left:1200.9px;top:1456.6px;" width="6.6" height="6.6" viewBox="0 0 6.6 6.6"><path d="M6.6 0 V6.6 H0 Z" fill="#8c8c8c"/></svg>
</div>
<div id="timeline-panel" class="sec">
<svg style="left:1262px;top:973.75px;" width="10" height="10" viewBox="0 0 10 10"><path d="M0.5 0.5 L9.5 9.5 M9.5 0.5 L0.5 9.5" stroke="#9c9c9c" stroke-width="1.6"/></svg>
<span class="t" id="t40" style="left:1294.5px;top:965.95px;font-size:23px;color:#d2d2d2;-webkit-text-stroke:0.3px #d2d2d2;transform:scaleX(0.9035);">Sequence 01</span>
<svg style="left:1439.5px;top:972px;" width="16.5" height="14" viewBox="0 0 16.5 14"><path d="M0 1 H16.5 M0 7 H16.5 M0 13 H16.5" stroke="#c8c8c8" stroke-width="1.8" fill="none"/></svg>
<span class="t" id="t41" style="left:1277px;top:1017.93px;font-size:31.5px;color:#52a2ef;font-weight:700;">00:00:02:12</span>
<svg style="left:1283.75px;top:1062px;" width="29" height="27" viewBox="0 0 29 27"><g fill="#4a90e2"><rect x="12.25" y="0" width="6" height="3.9"/><rect x="14.05" y="3" width="2.3" height="23.1"/><rect x="18.45" y="8" width="7.8" height="3.7"/><rect x="0.25" y="14.2" width="12" height="3.9"/><rect x="18.25" y="14.2" width="4.1" height="3.9"/><rect x="6.25" y="20.1" width="6" height="3.9"/><rect x="18.25" y="20.1" width="10" height="3.9"/></g><path d="M2.35 4 L24.25 25.9" stroke="#222222" stroke-width="4.6"/><path d="M2.35 4 L24.25 25.9" stroke="#4a90e2" stroke-width="1.8"/></svg>
<svg style="left:1355px;top:1063.8px;" width="22.1" height="24.3" viewBox="0 0 22.1 24.3"><path d="M2.9 24.3 V11.05 A8.15 8.15 0 0 1 19.2 11.05 V24.3" fill="none" stroke="#4a90e2" stroke-width="5.8"/><rect x="0" y="17.5" width="5.8" height="6.8" fill="#2a5a93"/><rect x="16.3" y="17.5" width="5.8" height="6.8" fill="#2a5a93"/></svg>
<svg style="left:1419.8px;top:1064px;" width="28.6" height="26.6" viewBox="0 0 28.6 26.6"><rect x="0" y="0" width="8.2" height="9.4" fill="#4a90e2"/><path d="M8.2 13.1 H1.1 V21.1 H8.2" fill="none" stroke="#4a90e2" stroke-width="2.2"/><rect x="10.2" y="0" width="18.2" height="10.1" fill="#4a90e2"/><path d="M10.2 -0.6 L29.4 19 L17.6 19.6 L10.2 27.6 Z" fill="#4a90e2" stroke="#222222" stroke-width="1.5"/><rect x="8.6" y="0" width="1.7" height="26.6" fill="#222222"/></svg>
<svg style="left:1495.5px;top:1067.5px;" width="14.5" height="18" viewBox="0 0 14.5 18"><path d="M0 0 H14.5 V10.5 L7.25 18 L0 10.5 Z" fill="#b4b4b4"/></svg>
<svg style="left:1555.75px;top:1062px;" width="29" height="29" viewBox="0 0 29 29"><path d="M10 10 L25 25" stroke="#b4b4b4" stroke-width="6.4" stroke-linecap="round"/><circle cx="8.3" cy="8.3" r="7.8" fill="#b4b4b4"/><rect x="-2.7" y="-13" width="5.4" height="11" transform="translate(7.5,7.5) rotate(-45)" fill="#222222"/></svg>
<div style="left:1622px;top:1066px;width:32px;height:20px;background:#4a4a4a;border-radius:3.5px;"></div>
<span class="t" id="t42" style="left:1626.5px;top:1066.20px;font-size:20px;color:#222222;font-weight:700;transform:scaleX(0.8134);">CC</span>
<div style="left:1713px;top:1096px;width:949px;height:418px;background:#1f1f1f;"></div>
<div style="left:1242px;top:1096px;width:471px;height:418px;background:#232323;"></div>
<div style="left:1434px;top:1151px;width:110px;height:149px;background:#202020;"></div>
<div style="left:1434px;top:1310px;width:56px;height:149px;background:#202020;"></div>
<div style="left:1544px;top:1151px;width:168.4px;height:149px;background:#242424;"></div>
<div style="left:1490px;top:1310px;width:222.4px;height:149px;background:#242424;"></div>
<span class="t" id="t43" style="left:1390px;top:1167.43px;font-size:19.2px;color:#949494;-webkit-text-stroke:0.3px #949494;transform:scaleX(0.8729);">V3</span>
<svg style="left:1341.75px;top:1164px;" width="16.5" height="20" viewBox="0 0 16.5 20"><path d="M3.2 9 V5.8 A4.3 4.3 0 0 1 11.6 4.6" fill="none" stroke="#b4b4b4" stroke-width="2.3"/><rect x="0" y="8.8" width="16.5" height="11.2" fill="#b4b4b4"/><circle cx="8.25" cy="13.2" r="2.1" fill="#222222"/><rect x="7.1" y="13.5" width="2.3" height="4.2" fill="#222222"/></svg>
<svg style="left:1450px;top:1167px;" width="24" height="17" viewBox="0 0 24 17"><rect x="1" y="1" width="15" height="5.5" fill="none" stroke="#b4b4b4" stroke-width="2"/><rect x="1" y="10.5" width="15" height="5.5" fill="none" stroke="#b4b4b4" stroke-width="2"/><path d="M16 3.8 H22.8 V13.2 H16" fill="none" stroke="#b4b4b4" stroke-width="2.2"/></svg>
<svg style="left:1502px;top:1169px;" width="26" height="16.5" viewBox="0 0 26 16.5"><path d="M0 8.25 C6 -2 20 -2 26 8.25 C20 18.5 6 18.5 0 8.25 Z" fill="#b8b8b8"/><circle cx="13" cy="8.25" r="5.4" fill="#222222"/><circle cx="14.9" cy="6.6" r="1.1" fill="#b8b8b8"/></svg>
<span class="t" id="t44" style="left:1390px;top:1217.43px;font-size:19.2px;color:#949494;-webkit-text-stroke:0.3px #949494;transform:scaleX(0.8729);">V2</span>
<svg style="left:1341.75px;top:1214px;" width="16.5" height="20" viewBox="0 0 16.5 20"><path d="M3.2 9 V5.8 A4.3 4.3 0 0 1 11.6 4.6" fill="none" stroke="#b4b4b4" stroke-width="2.3"/><rect x="0" y="8.8" width="16.5" height="11.2" fill="#b4b4b4"/><circle cx="8.25" cy="13.2" r="2.1" fill="#222222"/><rect x="7.1" y="13.5" width="2.3" height="4.2" fill="#222222"/></svg>
<svg style="left:1450px;top:1217px;" width="24" height="17" viewBox="0 0 24 17"><rect x="1" y="1" width="15" height="5.5" fill="none" stroke="#b4b4b4" stroke-width="2"/><rect x="1" y="10.5" width="15" height="5.5" fill="none" stroke="#b4b4b4" stroke-width="2"/><path d="M16 3.8 H22.8 V13.2 H16" fill="none" stroke="#b4b4b4" stroke-width="2.2"/></svg>
<svg style="left:1502px;top:1219px;" width="26" height="16.5" viewBox="0 0 26 16.5"><path d="M0 8.25 C6 -2 20 -2 26 8.25 C20 18.5 6 18.5 0 8.25 Z" fill="#b8b8b8"/><circle cx="13" cy="8.25" r="5.4" fill="#222222"/><circle cx="14.9" cy="6.6" r="1.1" fill="#b8b8b8"/></svg>
<div style="left:1370px;top:1252px;width:64px;height:48px;background:#1f5485;"></div>
<span class="t" id="t45" style="left:1390px;top:1267.43px;font-size:19.2px;color:#b3cde6;-webkit-text-stroke:0.3px #b3cde6;transform:scaleX(0.8729);">V1</span>
<svg style="left:1341.75px;top:1264px;" width="16.5" height="20" viewBox="0 0 16.5 20"><path d="M3.2 9 V5.8 A4.3 4.3 0 0 1 11.6 4.6" fill="none" stroke="#b4b4b4" stroke-width="2.3"/><rect x="0" y="8.8" width="16.5" height="11.2" fill="#b4b4b4"/><circle cx="8.25" cy="13.2" r="2.1" fill="#222222"/><rect x="7.1" y="13.5" width="2.3" height="4.2" fill="#222222"/></svg>
<svg style="left:1450px;top:1267px;" width="24" height="17" viewBox="0 0 24 17"><rect x="1" y="1" width="15" height="5.5" fill="none" stroke="#b4b4b4" stroke-width="2"/><rect x="1" y="10.5" width="15" height="5.5" fill="none" stroke="#b4b4b4" stroke-width="2"/><path d="M16 3.8 H22.8 V13.2 H16" fill="none" stroke="#b4b4b4" stroke-width="2.2"/></svg>
<svg style="left:1502px;top:1269px;" width="26" height="16.5" viewBox="0 0 26 16.5"><path d="M0 8.25 C6 -2 20 -2 26 8.25 C20 18.5 6 18.5 0 8.25 Z" fill="#b8b8b8"/><circle cx="13" cy="8.25" r="5.4" fill="#222222"/><circle cx="14.9" cy="6.6" r="1.1" fill="#b8b8b8"/></svg>
<div style="left:1370px;top:1310px;width:64px;height:48px;background:#1f5485;"></div>
<span class="t" id="t46" style="left:1390px;top:1325.43px;font-size:19.2px;color:#b3cde6;-webkit-text-stroke:0.3px #b3cde6;transform:scaleX(0.8729);">A1</span>
<svg style="left:1341.75px;top:1322px;" width="16.5" height="20" viewBox="0 0 16.5 20"><path d="M3.2 9 V5.8 A4.3 4.3 0 0 1 11.6 4.6" fill="none" stroke="#b4b4b4" stroke-width="2.3"/><rect x="0" y="8.8" width="16.5" height="11.2" fill="#b4b4b4"/><circle cx="8.25" cy="13.2" r="2.1" fill="#222222"/><rect x="7.1" y="13.5" width="2.3" height="4.2" fill="#222222"/></svg>
<svg style="left:1450px;top:1325px;" width="24" height="17" viewBox="0 0 24 17"><rect x="1" y="1" width="15" height="5.5" fill="none" stroke="#b4b4b4" stroke-width="2"/><rect x="1" y="10.5" width="15" height="5.5" fill="none" stroke="#b4b4b4" stroke-width="2"/><path d="M16 3.8 H22.8 V13.2 H16" fill="none" stroke="#b4b4b4" stroke-width="2.2"/></svg>
<span class="t" id="t47" style="left:1507.5px;top:1324.68px;font-size:19.2px;color:#b4b4b4;-webkit-text-stroke:0.3px #b4b4b4;transform:scaleX(0.9384);">M</span>
<span class="t" id="t48" style="left:1563.75px;top:1324.68px;font-size:19.2px;color:#b4b4b4;-webkit-text-stroke:0.3px #b4b4b4;transform:scaleX(0.8390);">S</span>
<svg style="left:1613.75px;top:1320px;" width="19" height="28" viewBox="0 0 19 28"><rect x="5" y="0" width="9" height="18" rx="4.5" fill="#b4b4b4"/><path d="M1.2 10.5 V12.5 A8.3 8.3 0 0 0 17.8 12.5 V10.5" fill="none" stroke="#b4b4b4" stroke-width="2"/><path d="M9.5 21 V26.5 M3.5 27 H15.5" stroke="#b4b4b4" stroke-width="2" fill="none"/></svg>
<div style="left:1370px;top:1359px;width:64px;height:49px;background:#1f5485;"></div>
<span class="t" id="t49" style="left:1390px;top:1374.43px;font-size:19.2px;color:#b3cde6;-webkit-text-stroke:0.3px #b3cde6;transform:scaleX(0.8729);">A2</span>
<svg style="left:1341.75px;top:1371px;" width="16.5" height="20" viewBox="0 0 16.5 20"><path d="M3.2 9 V5.8 A4.3 4.3 0 0 1 11.6 4.6" fill="none" stroke="#b4b4b4" stroke-width="2.3"/><rect x="0" y="8.8" width="16.5" height="11.2" fill="#b4b4b4"/><circle cx="8.25" cy="13.2" r="2.1" fill="#222222"/><rect x="7.1" y="13.5" width="2.3" height="4.2" fill="#222222"/></svg>
<svg style="left:1450px;top:1374px;" width="24" height="17" viewBox="0 0 24 17"><rect x="1" y="1" width="15" height="5.5" fill="none" stroke="#b4b4b4" stroke-width="2"/><rect x="1" y="10.5" width="15" height="5.5" fill="none" stroke="#b4b4b4" stroke-width="2"/><path d="M16 3.8 H22.8 V13.2 H16" fill="none" stroke="#b4b4b4" stroke-width="2.2"/></svg>
<span class="t" id="t50" style="left:1507.5px;top:1373.68px;font-size:19.2px;color:#b4b4b4;-webkit-text-stroke:0.3px #b4b4b4;transform:scaleX(0.9384);">M</span>
<span class="t" id="t51" style="left:1563.75px;top:1373.68px;font-size:19.2px;color:#b4b4b4;-webkit-text-stroke:0.3px #b4b4b4;transform:scaleX(0.8390);">S</span>
<svg style="left:1613.75px;top:1369px;" width="19" height="28" viewBox="0 0 19 28"><rect x="5" y="0" width="9" height="18" rx="4.5" fill="#b4b4b4"/><path d="M1.2 10.5 V12.5 A8.3 8.3 0 0 0 17.8 12.5 V10.5" fill="none" stroke="#b4b4b4" stroke-width="2"/><path d="M9.5 21 V26.5 M3.5 27 H15.5" stroke="#b4b4b4" stroke-width="2" fill="none"/></svg>
<div style="left:1370px;top:1409px;width:64px;height:49px;background:#1f5485;"></div>
<span class="t" id="t52" style="left:1390px;top:1424.43px;font-size:19.2px;color:#b3cde6;-webkit-text-stroke:0.3px #b3cde6;transform:scaleX(0.8729);">A3</span>
<svg style="left:1341.75px;top:1421px;" width="16.5" height="20" viewBox="0 0 16.5 20"><path d="M3.2 9 V5.8 A4.3 4.3 0 0 1 11.6 4.6" fill="none" stroke="#b4b4b4" stroke-width="2.3"/><rect x="0" y="8.8" width="16.5" height="11.2" fill="#b4b4b4"/><circle cx="8.25" cy="13.2" r="2.1" fill="#222222"/><rect x="7.1" y="13.5" width="2.3" height="4.2" fill="#222222"/></svg>
<svg style="left:1450px;top:1424px;" width="24" height="17" viewBox="0 0 24 17"><rect x="1" y="1" width="15" height="5.5" fill="none" stroke="#b4b4b4" stroke-width="2"/><rect x="1" y="10.5" width="15" height="5.5" fill="none" stroke="#b4b4b4" stroke-width="2"/><path d="M16 3.8 H22.8 V13.2 H16" fill="none" stroke="#b4b4b4" stroke-width="2.2"/></svg>
<span class="t" id="t53" style="left:1507.5px;top:1423.68px;font-size:19.2px;color:#b4b4b4;-webkit-text-stroke:0.3px #b4b4b4;transform:scaleX(0.9384);">M</span>
<span class="t" id="t54" style="left:1563.75px;top:1423.68px;font-size:19.2px;color:#b4b4b4;-webkit-text-stroke:0.3px #b4b4b4;transform:scaleX(0.8390);">S</span>
<svg style="left:1613.75px;top:1419px;" width="19" height="28" viewBox="0 0 19 28"><rect x="5" y="0" width="9" height="18" rx="4.5" fill="#b4b4b4"/><path d="M1.2 10.5 V12.5 A8.3 8.3 0 0 0 17.8 12.5 V10.5" fill="none" stroke="#b4b4b4" stroke-width="2"/><path d="M9.5 21 V26.5 M3.5 27 H15.5" stroke="#b4b4b4" stroke-width="2" fill="none"/></svg>
<svg style="left:1341.75px;top:1471px;" width="16.5" height="20" viewBox="0 0 16.5 20"><path d="M3.2 9 V5.8 A4.3 4.3 0 0 1 11.6 4.6" fill="none" stroke="#b4b4b4" stroke-width="2.3"/><rect x="0" y="8.8" width="16.5" height="11.2" fill="#b4b4b4"/><circle cx="8.25" cy="13.2" r="2.1" fill="#222222"/><rect x="7.1" y="13.5" width="2.3" height="4.2" fill="#222222"/></svg>
<span class="t" id="t55" style="left:1375px;top:1471.60px;font-size:24px;color:#aaaaaa;-webkit-text-stroke:0.3px #aaaaaa;transform:scaleX(0.9242);">Mix</span>
<span class="t" id="t56" style="left:1532px;top:1473.35px;font-size:24px;color:#52a2ef;-webkit-text-stroke:0.3px #52a2ef;transform:scaleX(0.8240);">0.0</span>
<svg style="left:1673.75px;top:1465.5px;" width="22.5" height="19" viewBox="0 0 22.5 19"><path d="M0 0 L10.5 9.5 L0 19 Z M22.5 0 L12 9.5 L22.5 19 Z" fill="#c4c4c4"/><rect x="10.3" y="4" width="1.9" height="11" fill="#c4c4c4"/></svg>
<div style="left:1242px;top:1150px;width:1420px;height:1.6px;background:#303030;"></div>
<div style="left:1242px;top:1200px;width:1420px;height:1.6px;background:#303030;"></div>
<div style="left:1242px;top:1250px;width:1420px;height:1.6px;background:#303030;"></div>
<div style="left:1242px;top:1358px;width:1420px;height:1.6px;background:#303030;"></div>
<div style="left:1242px;top:1408px;width:1420px;height:1.6px;background:#303030;"></div>
<div style="left:1242px;top:1458px;width:1420px;height:1.6px;background:#303030;"></div>
<div style="left:1242px;top:1508px;width:1420px;height:1.6px;background:#303030;"></div>
<div style="left:1242px;top:1300px;width:1444px;height:10px;background:#333333;"></div>
<div style="left:1712.4px;top:1096px;width:1.6px;height:418px;background:#383838;"></div>
<div style="left:1713px;top:1091px;width:949px;height:5px;background:#262626;"></div>
<span class="t" id="t57" style="left:1715px;top:1043.73px;font-size:21.2px;color:#9b9b9b;-webkit-text-stroke:0.55px #9b9b9b;transform:scaleX(1.0098);">:00:00</span>
<span class="t" id="t58" style="left:1810.5px;top:1043.73px;font-size:21.2px;color:#9b9b9b;-webkit-text-stroke:0.55px #9b9b9b;transform:scaleX(1.0184);">00:00:15:00</span>
<span class="t" id="t59" style="left:1960.5px;top:1043.73px;font-size:21.2px;color:#9b9b9b;-webkit-text-stroke:0.55px #9b9b9b;transform:scaleX(1.0184);">00:00:30:00</span>
<span class="t" id="t60" style="left:2110.5px;top:1043.73px;font-size:21.2px;color:#9b9b9b;-webkit-text-stroke:0.55px #9b9b9b;transform:scaleX(1.0184);">00:00:45:00</span>
<span class="t" id="t61" style="left:2260.5px;top:1043.73px;font-size:21.2px;color:#9b9b9b;-webkit-text-stroke:0.55px #9b9b9b;transform:scaleX(1.0184);">00:01:00:00</span>
<span class="t" id="t62" style="left:2410.5px;top:1043.73px;font-size:21.2px;color:#9b9b9b;-webkit-text-stroke:0.55px #9b9b9b;transform:scaleX(1.0184);">00:01:15:00</span>
<span class="t" id="t63" style="left:2560.5px;top:1043.73px;font-size:21.2px;color:#9b9b9b;-webkit-text-stroke:0.55px #9b9b9b;transform:scaleX(1.0134);">00:01:30:0</span>
<svg style="left:1713px;top:1069px;" width="950" height="22" viewBox="0 0 950 22"><rect x="1.0" y="0" width="2" height="21.5" fill="#595959"/><rect x="11.0" y="12" width="2" height="9.5" fill="#595959"/><rect x="21.0" y="12" width="2" height="9.5" fill="#595959"/><rect x="31.0" y="12" width="2" height="9.5" fill="#595959"/><rect x="41.0" y="12" width="2" height="9.5" fill="#595959"/><rect x="51.0" y="12" width="2" height="9.5" fill="#595959"/><rect x="61.0" y="12" width="2" height="9.5" fill="#595959"/><rect x="71.0" y="12" width="2" height="9.5" fill="#595959"/><rect x="81.0" y="12" width="2" height="9.5" fill="#595959"/><rect x="91.0" y="12" width="2" height="9.5" fill="#595959"/><rect x="101.0" y="12" width="2" height="9.5" fill="#595959"/><rect x="111.0" y="12" width="2" height="9.5" fill="#595959"/><rect x="121.0" y="12" width="2" height="9.5" fill="#595959"/><rect x="131.0" y="12" width="2" height="9.5" fill="#595959"/><rect x="141.0" y="12" width="2" height="9.5" fill="#595959"/><rect x="151.0" y="0" width="2" height="21.5" fill="#595959"/><rect x="161.0" y="12" width="2" height="9.5" fill="#595959"/><rect x="171.0" y="12" width="2" height="9.5" fill="#595959"/><rect x="181.0" y="12" width="2" height="9.5" fill="#595959"/><rect x="191.0" y="12" width="2" height="9.5" fill="#595959"/><rect x="201.0" y="12" width="2" height="9.5" fill="#595959"/><rect x="211.0" y="12" width="2" height="9.5" fill="#595959"/><rect x="221.0" y="12" width="2" height="9.5" fill="#595959"/><rect x="231.0" y="12" width="2" height="9.5" fill="#595959"/><rect x="241.0" y="12" width="2" height="9.5" fill="#595959"/><rect x="251.0" y="12" width="2" height="9.5" fill="#595959"/><rect x="261.0" y="12" width="2" height="9.5" fill="#595959"/><rect x="271.0" y="12" width="2" height="9.5" fill="#595959"/><rect x="281.0" y="12" width="2" height="9.5" fill="#595959"/><rect x="291.0" y="12" width="2" height="9.5" fill="#595959"/><rect x="301.0" y="0" width="2" height="21.5" fill="#595959"/><rect x="311.0" y="12" width="2" height="9.5" fill="#595959"/><rect x="321.0" y="12" width="2" height="9.5" fill="#595959"/><rect x="331.0" y="12" width="2" height="9.5" fill="#595959"/><rect x="341.0" y="12" width="2" height="9.5" fill="#595959"/><rect x="351.0" y="12" width="2" height="9.5" fill="#595959"/><rect x="361.0" y="12" width="2" height="9.5" fill="#595959"/><rect x="371.0" y="12" width="2" height="9.5" fill="#595959"/><rect x="381.0" y="12" width="2" height="9.5" fill="#595959"/><rect x="391.0" y="12" width="2" height="9.5" fill="#595959"/><rect x="401.0" y="12" width="2" height="9.5" fill="#595959"/><rect x="411.0" y="12" width="2" height="9.5" fill="#595959"/><rect x="421.0" y="12" width="2" height="9.5" fill="#595959"/><rect x="431.0" y="12" width="2" height="9.5" fill="#595959"/><rect x="441.0" y="12" width="2" height="9.5" fill="#595959"/><rect x="451.0" y="0" width="2" height="21.5" fill="#595959"/><rect x="461.0" y="12" width="2" height="9.5" fill="#595959"/><rect x="471.0" y="12" width="2" height="9.5" fill="#595959"/><rect x="481.0" y="12" width="2" height="9.5" fill="#595959"/><rect x="491.0" y="12" width="2" height="9.5" fill="#595959"/><rect x="501.0" y="12" width="2" height="9.5" fill="#595959"/><rect x="511.0" y="12" width="2" height="9.5" fill="#595959"/><rect x="521.0" y="12" width="2" height="9.5" fill="#595959"/><rect x="531.0" y="12" width="2" height="9.5" fill="#595959"/><rect x="541.0" y="12" width="2" height="9.5" fill="#595959"/><rect x="551.0" y="12" width="2" height="9.5" fill="#595959"/><rect x="561.0" y="12" width="2" height="9.5" fill="#595959"/><rect x="571.0" y="12" width="2" height="9.5" fill="#595959"/><rect x="581.0" y="12" width="2" height="9.5" fill="#595959"/><rect x="591.0" y="12" width="2" height="9.5" fill="#595959"/><rect x="601.0" y="0" width="2" height="21.5" fill="#595959"/><rect x="611.0" y="12" width="2" height="9.5" fill="#595959"/><rect x="621.0" y="12" width="2" height="9.5" fill="#595959"/><rect x="631.0" y="12" width="2" height="9.5" fill="#595959"/><rect x="641.0" y="12" width="2" height="9.5" fill="#595959"/><rect x="651.0" y="12" width="2" height="9.5" fill="#595959"/><rect x="661.0" y="12" width="2" height="9.5" fill="#595959"/><rect x="671.0" y="12" width="2" height="9.5" fill="#595959"/><rect x="681.0" y="12" width="2" height="9.5" fill="#595959"/><rect x="691.0" y="12" width="2" height="9.5" fill="#595959"/><rect x="701.0" y="12" width="2" height="9.5" fill="#595959"/><rect x="711.0" y="12" width="2" height="9.5" fill="#595959"/><rect x="721.0" y="12" width="2" height="9.5" fill="#595959"/><rect x="731.0" y="12" width="2" height="9.5" fill="#595959"/><rect x="741.0" y="12" width="2" height="9.5" fill="#595959"/><rect x="751.0" y="0" width="2" height="21.5" fill="#595959"/><rect x="761.0" y="12" width="2" height="9.5" fill="#595959"/><rect x="771.0" y="12" width="2" height="9.5" fill="#595959"/><rect x="781.0" y="12" width="2" height="9.5" fill="#595959"/><rect x="791.0" y="12" width="2" height="9.5" fill="#595959"/><rect x="801.0" y="12" width="2" height="9.5" fill="#595959"/><rect x="811.0" y="12" width="2" height="9.5" fill="#595959"/><rect x="821.0" y="12" width="2" height="9.5" fill="#595959"/><rect x="831.0" y="12" width="2" height="9.5" fill="#595959"/><rect x="841.0" y="12" width="2" height="9.5" fill="#595959"/><rect x="851.0" y="12" width="2" height="9.5" fill="#595959"/><rect x="861.0" y="12" width="2" height="9.5" fill="#595959"/><rect x="871.0" y="12" width="2" height="9.5" fill="#595959"/><rect x="881.0" y="12" width="2" height="9.5" fill="#595959"/><rect x="891.0" y="12" width="2" height="9.5" fill="#595959"/><rect x="901.0" y="0" width="2" height="21.5" fill="#595959"/><rect x="911.0" y="12" width="2" height="9.5" fill="#595959"/><rect x="921.0" y="12" width="2" height="9.5" fill="#595959"/><rect x="931.0" y="12" width="2" height="9.5" fill="#595959"/><rect x="941.0" y="12" width="2" height="9.5" fill="#595959"/></svg>
<svg style="left:1715.75px;top:1010px;" width="50.5" height="24" viewBox="0 0 50.5 24"><path d="M0 0 H50.5 V17 L43.75 23.75 L40.5 20.5 L36.25 23.75 L30.5 19.5 L24.25 23.75 L15.5 18.5 L7.25 23.75 L0 17 Z" fill="#7a8b42"/></svg>
<div style="left:1713.75px;top:1092px;width:68.5px;height:3.8px;background:#eee23a;"></div>
<div style="left:1713.75px;top:1252px;width:66.5px;height:48px;background:#a896de;"></div>
<svg style="left:1713.75px;top:1252px;" width="68.5" height="12" viewBox="0 0 68.5 12"><path d="M0 0 H10.5 L0 10.5 Z" fill="#e6e6e6"/><path d="M11.5 0 L0 11.5" stroke="#111" stroke-width="2.2"/><path d="M68.5 0 H58 L68.5 10.5 Z" fill="#e6e6e6"/><path d="M57 0 L68.5 11.5" stroke="#111" stroke-width="2.2"/></svg>
<div style="left:1735px;top:1258.75px;width:22.5px;height:20.75px;background:#8b8b8b;box-sizing:border-box;border:1.3px solid #a9a9a9;"></div>
<span class="t" id="t64" style="left:1739.5px;top:1258.62px;font-size:19.5px;color:#4e4e4e;-webkit-text-stroke:0.3px #4e4e4e;font-style:italic;transform:scaleX(0.9557);">fx</span>
<div style="left:1737.6px;top:1088px;width:2.2px;height:426px;background:#4a8fe0;"></div>
<svg style="left:1728px;top:1068px;" width="22" height="24" viewBox="0 0 22 24"><path d="M0 0 H22 V15.4 L12.3 23.9 H9.7 L0 15.4 Z" fill="#4a90e2"/><rect x="10" y="18.3" width="2.1" height="5.6" fill="#0c0c0c"/></svg>
<div style="left:2663.75px;top:1100px;width:20px;height:200px;background:#323232;border-radius:10px;"></div>
<div style="left:2663.75px;top:1311px;width:20px;height:202px;background:#323232;border-radius:10px;"></div>
<div style="left:2663.75px;top:1103.75px;width:20px;height:20px;background:#262626;border-radius:50%;box-sizing:border-box;border:3.4px solid #a4a4a4;"></div>
<div style="left:2663.75px;top:1278px;width:20px;height:20px;background:#262626;border-radius:50%;box-sizing:border-box;border:3.4px solid #a4a4a4;"></div>
<div style="left:2663.75px;top:1312.5px;width:20px;height:20px;background:#262626;border-radius:50%;box-sizing:border-box;border:3.4px solid #a4a4a4;"></div>
<div style="left:2663.75px;top:1490px;width:20px;height:20px;background:#262626;border-radius:50%;box-sizing:border-box;border:3.4px solid #a4a4a4;"></div>
<div style="left:1267.5px;top:1516.5px;width:1394px;height:21px;background:#1d1d1d;box-sizing:border-box;border:1.3px solid #2d2d2d;border-radius:10.5px;"></div>
<div style="left:1267.5px;top:1516.5px;width:609px;height:21px;background:#323232;border-radius:10.5px;"></div>
<div style="left:1268px;top:1517px;width:20px;height:20px;background:#262626;border-radius:50%;box-sizing:border-box;border:3.4px solid #a4a4a4;"></div>
<div style="left:1856px;top:1517px;width:20px;height:20px;background:#262626;border-radius:50%;box-sizing:border-box;border:3.4px solid #a4a4a4;"></div>
</div>
<div id="audio-meters" class="sec">
<div style="left:2744px;top:1002px;width:62px;height:535.8px;background:#1c1c1c;box-sizing:border-box;border:2px solid #000;"></div>
<div style="left:2744px;top:1020px;width:62px;height:2px;background:#000;"></div>
<div style="left:2774px;top:1002px;width:2px;height:19px;background:#000;"></div>
<div style="left:2746px;top:1531.8px;width:28.1px;height:2.5px;background:#f8f84c;"></div>
<div style="left:2776px;top:1531.8px;width:28.2px;height:2.5px;background:#f8f84c;"></div>
<svg style="left:2806px;top:1020px;" width="10" height="520" viewBox="0 0 10 520"><rect x="0" y="4" width="8" height="2" fill="#b2b2b2"/><rect x="0" y="12" width="4" height="2" fill="#a6a6a6"/><rect x="0" y="21" width="4" height="2" fill="#a6a6a6"/><rect x="0" y="29" width="4" height="2" fill="#a6a6a6"/><rect x="0" y="38" width="4" height="2" fill="#a6a6a6"/><rect x="0" y="46" width="4" height="2" fill="#a6a6a6"/><rect x="0" y="55" width="8" height="2" fill="#b2b2b2"/><rect x="0" y="63" width="4" height="2" fill="#a6a6a6"/><rect x="0" y="72" width="4" height="2" fill="#a6a6a6"/><rect x="0" y="80" width="4" height="2" fill="#a6a6a6"/><rect x="0" y="89" width="4" height="2" fill="#a6a6a6"/><rect x="0" y="97" width="4" height="2" fill="#a6a6a6"/><rect x="0" y="106" width="8" height="2" fill="#b2b2b2"/><rect x="0" y="114" width="4" height="2" fill="#a6a6a6"/><rect x="0" y="123" width="4" height="2" fill="#a6a6a6"/><rect x="0" y="131" width="4" height="2" fill="#a6a6a6"/><rect x="0" y="139" width="4" height="2" fill="#a6a6a6"/><rect x="0" y="148" width="4" height="2" fill="#a6a6a6"/><rect x="0" y="156" width="8" height="2" fill="#b2b2b2"/><rect x="0" y="165" width="4" height="2" fill="#a6a6a6"/><rect x="0" y="173" width="4" height="2" fill="#a6a6a6"/><rect x="0" y="182" width="4" height="2" fill="#a6a6a6"/><rect x="0" y="190" width="4" height="2" fill="#a6a6a6"/><rect x="0" y="199" width="4" height="2" fill="#a6a6a6"/><rect x="0" y="207" width="8" height="2" fill="#b2b2b2"/><rect x="0" y="216" width="4" height="2" fill="#a6a6a6"/><rect x="0" y="224" width="4" height="2" fill="#a6a6a6"/><rect x="0" y="233" width="4" height="2" fill="#a6a6a6"/><rect x="0" y="241" width="4" height="2" fill="#a6a6a6"/><rect x="0" y="250" width="4" height="2" fill="#a6a6a6"/><rect x="0" y="258" width="8" height="2" fill="#b2b2b2"/><rect x="0" y="266" width="4" height="2" fill="#a6a6a6"/><rect x="0" y="275" width="4" height="2" fill="#a6a6a6"/><rect x="0" y="283" width="4" height="2" fill="#a6a6a6"/><rect x="0" y="292" width="4" height="2" fill="#a6a6a6"/><rect x="0" y="300" width="4" height="2" fill="#a6a6a6"/><rect x="0" y="309" width="8" height="2" fill="#b2b2b2"/><rect x="0" y="317" width="4" height="2" fill="#a6a6a6"/><rect x="0" y="326" width="4" height="2" fill="#a6a6a6"/><rect x="0" y="334" width="4" height="2" fill="#a6a6a6"/><rect x="0" y="343" width="4" height="2" fill="#a6a6a6"/><rect x="0" y="351" width="4" height="2" fill="#a6a6a6"/><rect x="0" y="360" width="8" height="2" fill="#b2b2b2"/><rect x="0" y="368" width="4" height="2" fill="#a6a6a6"/><rect x="0" y="377" width="4" height="2" fill="#a6a6a6"/><rect x="0" y="385" width="4" height="2" fill="#a6a6a6"/><rect x="0" y="393" width="4" height="2" fill="#a6a6a6"/><rect x="0" y="402" width="4" height="2" fill="#a6a6a6"/><rect x="0" y="410" width="8" height="2" fill="#b2b2b2"/><rect x="0" y="419" width="4" height="2" fill="#a6a6a6"/><rect x="0" y="427" width="4" height="2" fill="#a6a6a6"/><rect x="0" y="436" width="4" height="2" fill="#a6a6a6"/><rect x="0" y="444" width="4" height="2" fill="#a6a6a6"/><rect x="0" y="453" width="4" height="2" fill="#a6a6a6"/><rect x="0" y="461" width="8" height="2" fill="#b2b2b2"/><rect x="0" y="470" width="4" height="2" fill="#a6a6a6"/><rect x="0" y="478" width="4" height="2" fill="#a6a6a6"/><rect x="0" y="487" width="4" height="2" fill="#a6a6a6"/><rect x="0" y="495" width="4" height="2" fill="#a6a6a6"/><rect x="0" y="504" width="4" height="2" fill="#a6a6a6"/><rect x="0" y="512" width="8" height="2" fill="#b2b2b2"/></svg>
<span class="t" id="t65" style="left:2821px;top:1017.23px;font-size:16.2px;color:#a6a6a6;-webkit-text-stroke:0.3px #a6a6a6;transform:scaleX(0.9428);">0</span>
<span class="t" id="t66" style="left:2821px;top:1068.13px;font-size:16.2px;color:#a6a6a6;-webkit-text-stroke:0.3px #a6a6a6;transform:scaleX(1.1106);">-6</span>
<span class="t" id="t67" style="left:2821px;top:1119.03px;font-size:16.2px;color:#a6a6a6;-webkit-text-stroke:0.3px #a6a6a6;transform:scaleX(1.0681);">-12</span>
<span class="t" id="t68" style="left:2821px;top:1169.93px;font-size:16.2px;color:#a6a6a6;-webkit-text-stroke:0.3px #a6a6a6;transform:scaleX(1.0681);">-18</span>
<span class="t" id="t69" style="left:2821px;top:1220.83px;font-size:16.2px;color:#a6a6a6;-webkit-text-stroke:0.3px #a6a6a6;transform:scaleX(1.0681);">-24</span>
<span class="t" id="t70" style="left:2821px;top:1271.73px;font-size:16.2px;color:#a6a6a6;-webkit-text-stroke:0.3px #a6a6a6;transform:scaleX(1.0681);">-30</span>
<span class="t" id="t71" style="left:2821px;top:1322.63px;font-size:16.2px;color:#a6a6a6;-webkit-text-stroke:0.3px #a6a6a6;transform:scaleX(1.0681);">-36</span>
<span class="t" id="t72" style="left:2821px;top:1373.53px;font-size:16.2px;color:#a6a6a6;-webkit-text-stroke:0.3px #a6a6a6;transform:scaleX(1.0681);">-42</span>
<span class="t" id="t73" style="left:2821px;top:1424.43px;font-size:16.2px;color:#a6a6a6;-webkit-text-stroke:0.3px #a6a6a6;transform:scaleX(1.0681);">-48</span>
<span class="t" id="t74" style="left:2821px;top:1475.33px;font-size:16.2px;color:#a6a6a6;-webkit-text-stroke:0.3px #a6a6a6;transform:scaleX(1.0681);">-54</span>
<span class="t" id="t75" style="left:2821px;top:1519.98px;font-size:16.2px;color:#a6a6a6;-webkit-text-stroke:0.3px #a6a6a6;transform:scaleX(1.0599);">dB</span>
</div>
</body></html>
